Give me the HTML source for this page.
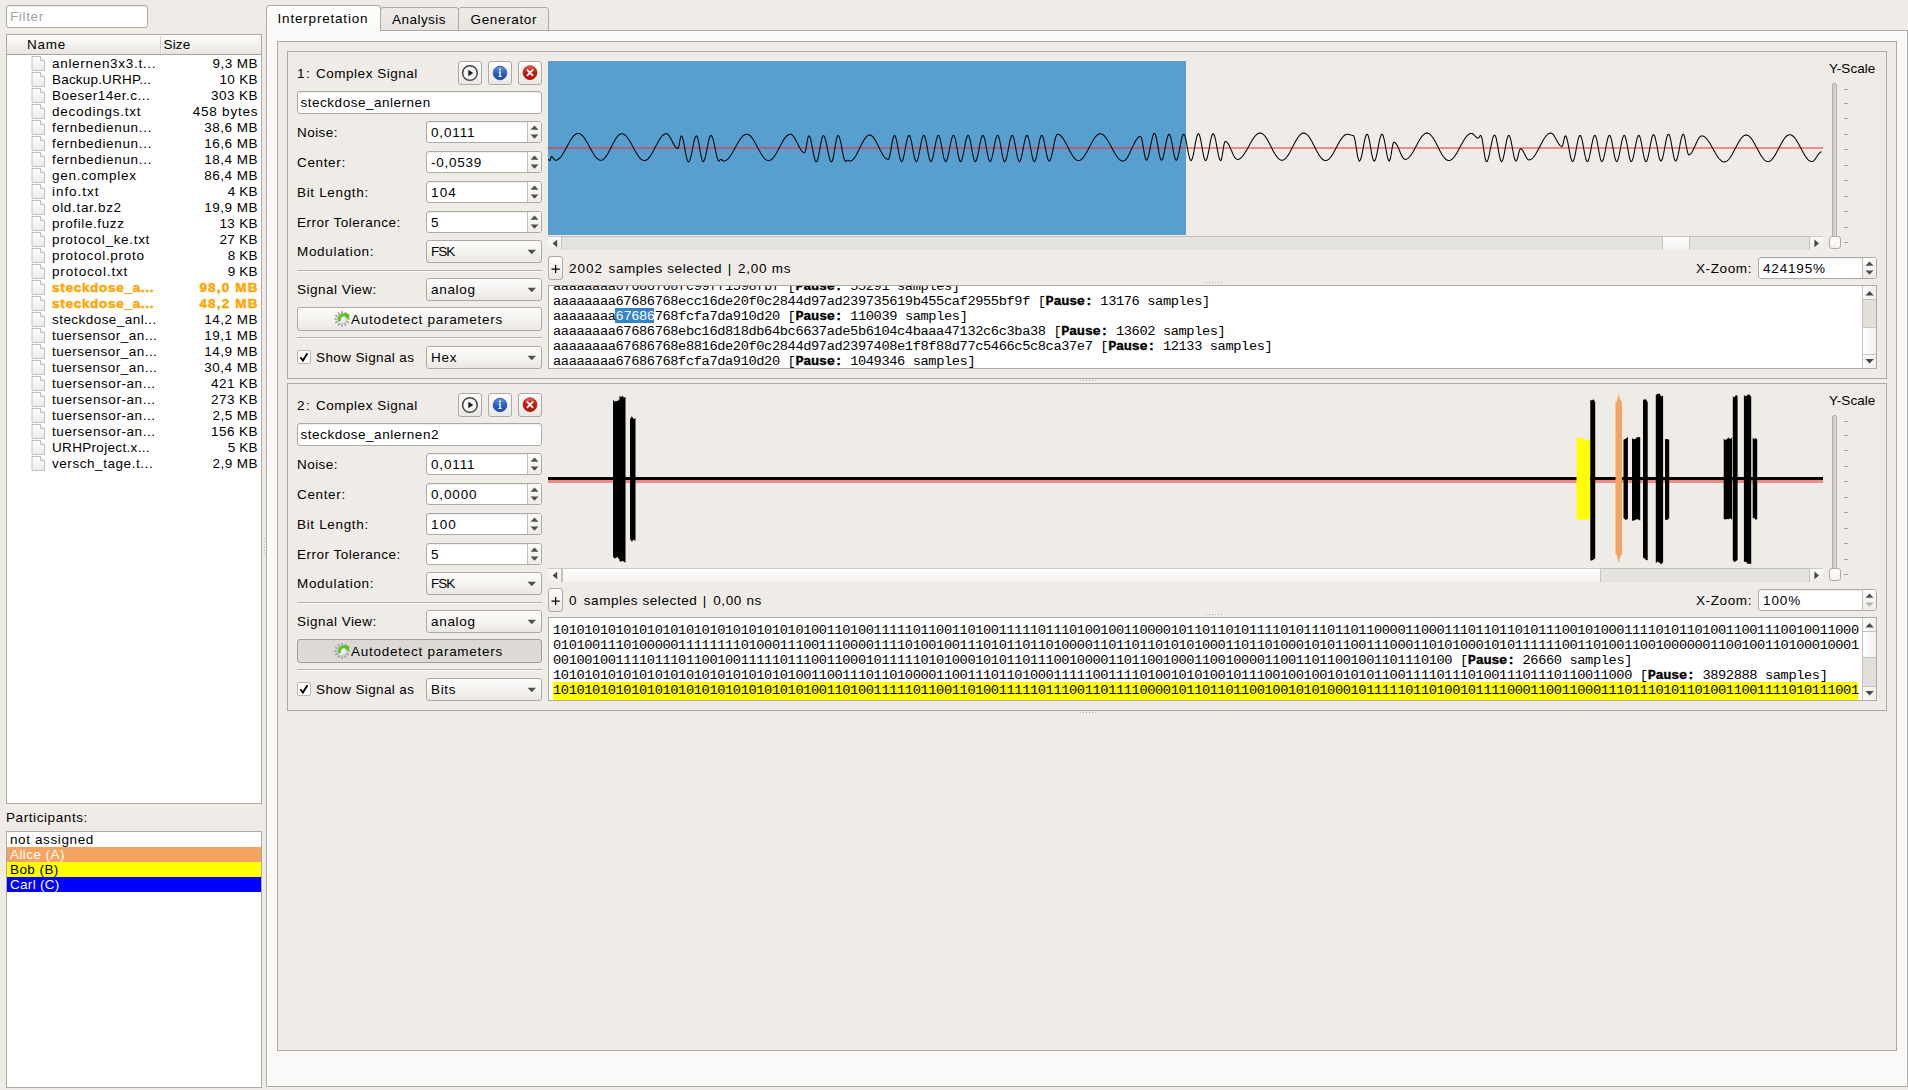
<!DOCTYPE html>
<html><head><meta charset="utf-8"><title>Universal Radio Hacker</title><style>
html,body{margin:0;padding:0}
body{width:1908px;height:1090px;background:#efebe7;position:relative;overflow:hidden;font-family:"Liberation Sans",sans-serif;font-size:13.5px;color:#000}
div,span.t,span.m,svg.a{position:absolute;box-sizing:border-box}
span.t{line-height:16px;height:16px;white-space:pre}
span.m b{-webkit-text-stroke:0.3px #000}
span.m{font-family:"Liberation Mono",monospace;font-size:13.7px;letter-spacing:-0.395px;line-height:15px;height:15px;white-space:pre}
</style></head><body>
<div style="left:6px;top:5px;width:142px;height:23px;background:#fff;border:1px solid #ada9a4;border-radius:3px;box-shadow:inset 0 1px 1px rgba(0,0,0,.08);"></div>
<span class="t" style="left:10.00px;top:8.5px;letter-spacing:0.628px;color:#a6a29c;">Filter</span>
<div style="left:6px;top:34px;width:256px;height:770px;background:#fff;border:1px solid #ada9a4;"></div>
<div style="left:7px;top:35px;width:254px;height:20px;background:linear-gradient(#fcfbfa,#f3f1ee 50%,#e8e5e1);border-bottom:1px solid #aaa59f;"></div>
<div style="left:160px;top:36px;width:1px;height:17px;background:#cfcbc6;"></div>
<div style="left:161px;top:36px;width:1px;height:17px;background:#fff;"></div>
<span class="t" style="left:27.00px;top:37px;letter-spacing:0.781px;">Name</span>
<span class="t" style="left:163.50px;top:37px;letter-spacing:0.141px;">Size</span>
<svg class="a" style="left:30.9px;top:55.6px" width="15" height="16" viewBox="0 0 15 16"><defs><linearGradient id="fg0" x1="0" y1="0" x2="0" y2="1"><stop offset="0" stop-color="#fff"/><stop offset="1" stop-color="#eaeaea"/></linearGradient></defs><path d="M1 .5H9.5L13.5 4.5V14.6H1Z" fill="url(#fg0)" stroke="#bebebe" stroke-width="1"/><path d="M9.5 .5V4.5H13.5" fill="#f6f6f6" stroke="#bebebe" stroke-width="1"/></svg>
<span class="t" style="left:52.00px;top:56px;letter-spacing:0.696px;">anlernen3x3.t...</span>
<span class="t" style="left:212.56px;top:56px;letter-spacing:0.435px;">9,3 MB</span>
<svg class="a" style="left:30.9px;top:71.6px" width="15" height="16" viewBox="0 0 15 16"><defs><linearGradient id="fg1" x1="0" y1="0" x2="0" y2="1"><stop offset="0" stop-color="#fff"/><stop offset="1" stop-color="#eaeaea"/></linearGradient></defs><path d="M1 .5H9.5L13.5 4.5V14.6H1Z" fill="url(#fg1)" stroke="#bebebe" stroke-width="1"/><path d="M9.5 .5V4.5H13.5" fill="#f6f6f6" stroke="#bebebe" stroke-width="1"/></svg>
<span class="t" style="left:52.00px;top:72px;letter-spacing:0.189px;">Backup.URHP...</span>
<span class="t" style="left:219.38px;top:72px;letter-spacing:0.336px;">10 KB</span>
<svg class="a" style="left:30.9px;top:87.6px" width="15" height="16" viewBox="0 0 15 16"><defs><linearGradient id="fg2" x1="0" y1="0" x2="0" y2="1"><stop offset="0" stop-color="#fff"/><stop offset="1" stop-color="#eaeaea"/></linearGradient></defs><path d="M1 .5H9.5L13.5 4.5V14.6H1Z" fill="url(#fg2)" stroke="#bebebe" stroke-width="1"/><path d="M9.5 .5V4.5H13.5" fill="#f6f6f6" stroke="#bebebe" stroke-width="1"/></svg>
<span class="t" style="left:52.00px;top:88px;letter-spacing:0.500px;">Boeser14er.c...</span>
<span class="t" style="left:211.11px;top:88px;letter-spacing:0.421px;">303 KB</span>
<svg class="a" style="left:30.9px;top:103.6px" width="15" height="16" viewBox="0 0 15 16"><defs><linearGradient id="fg3" x1="0" y1="0" x2="0" y2="1"><stop offset="0" stop-color="#fff"/><stop offset="1" stop-color="#eaeaea"/></linearGradient></defs><path d="M1 .5H9.5L13.5 4.5V14.6H1Z" fill="url(#fg3)" stroke="#bebebe" stroke-width="1"/><path d="M9.5 .5V4.5H13.5" fill="#f6f6f6" stroke="#bebebe" stroke-width="1"/></svg>
<span class="t" style="left:52.00px;top:104px;letter-spacing:0.746px;">decodings.txt</span>
<span class="t" style="left:192.74px;top:104px;letter-spacing:0.777px;">458 bytes</span>
<svg class="a" style="left:30.9px;top:119.6px" width="15" height="16" viewBox="0 0 15 16"><defs><linearGradient id="fg4" x1="0" y1="0" x2="0" y2="1"><stop offset="0" stop-color="#fff"/><stop offset="1" stop-color="#eaeaea"/></linearGradient></defs><path d="M1 .5H9.5L13.5 4.5V14.6H1Z" fill="url(#fg4)" stroke="#bebebe" stroke-width="1"/><path d="M9.5 .5V4.5H13.5" fill="#f6f6f6" stroke="#bebebe" stroke-width="1"/></svg>
<span class="t" style="left:52.00px;top:120px;letter-spacing:0.665px;">fernbedienun...</span>
<span class="t" style="left:204.29px;top:120px;letter-spacing:0.489px;">38,6 MB</span>
<svg class="a" style="left:30.9px;top:135.6px" width="15" height="16" viewBox="0 0 15 16"><defs><linearGradient id="fg5" x1="0" y1="0" x2="0" y2="1"><stop offset="0" stop-color="#fff"/><stop offset="1" stop-color="#eaeaea"/></linearGradient></defs><path d="M1 .5H9.5L13.5 4.5V14.6H1Z" fill="url(#fg5)" stroke="#bebebe" stroke-width="1"/><path d="M9.5 .5V4.5H13.5" fill="#f6f6f6" stroke="#bebebe" stroke-width="1"/></svg>
<span class="t" style="left:52.00px;top:136px;letter-spacing:0.665px;">fernbedienun...</span>
<span class="t" style="left:204.29px;top:136px;letter-spacing:0.489px;">16,6 MB</span>
<svg class="a" style="left:30.9px;top:151.6px" width="15" height="16" viewBox="0 0 15 16"><defs><linearGradient id="fg6" x1="0" y1="0" x2="0" y2="1"><stop offset="0" stop-color="#fff"/><stop offset="1" stop-color="#eaeaea"/></linearGradient></defs><path d="M1 .5H9.5L13.5 4.5V14.6H1Z" fill="url(#fg6)" stroke="#bebebe" stroke-width="1"/><path d="M9.5 .5V4.5H13.5" fill="#f6f6f6" stroke="#bebebe" stroke-width="1"/></svg>
<span class="t" style="left:52.00px;top:152px;letter-spacing:0.665px;">fernbedienun...</span>
<span class="t" style="left:204.29px;top:152px;letter-spacing:0.489px;">18,4 MB</span>
<svg class="a" style="left:30.9px;top:167.6px" width="15" height="16" viewBox="0 0 15 16"><defs><linearGradient id="fg7" x1="0" y1="0" x2="0" y2="1"><stop offset="0" stop-color="#fff"/><stop offset="1" stop-color="#eaeaea"/></linearGradient></defs><path d="M1 .5H9.5L13.5 4.5V14.6H1Z" fill="url(#fg7)" stroke="#bebebe" stroke-width="1"/><path d="M9.5 .5V4.5H13.5" fill="#f6f6f6" stroke="#bebebe" stroke-width="1"/></svg>
<span class="t" style="left:52.00px;top:168px;letter-spacing:0.740px;">gen.complex</span>
<span class="t" style="left:204.29px;top:168px;letter-spacing:0.489px;">86,4 MB</span>
<svg class="a" style="left:30.9px;top:183.6px" width="15" height="16" viewBox="0 0 15 16"><defs><linearGradient id="fg8" x1="0" y1="0" x2="0" y2="1"><stop offset="0" stop-color="#fff"/><stop offset="1" stop-color="#eaeaea"/></linearGradient></defs><path d="M1 .5H9.5L13.5 4.5V14.6H1Z" fill="url(#fg8)" stroke="#bebebe" stroke-width="1"/><path d="M9.5 .5V4.5H13.5" fill="#f6f6f6" stroke="#bebebe" stroke-width="1"/></svg>
<span class="t" style="left:52.00px;top:184px;letter-spacing:0.948px;">info.txt</span>
<span class="t" style="left:227.65px;top:184px;letter-spacing:0.193px;">4 KB</span>
<svg class="a" style="left:30.9px;top:199.6px" width="15" height="16" viewBox="0 0 15 16"><defs><linearGradient id="fg9" x1="0" y1="0" x2="0" y2="1"><stop offset="0" stop-color="#fff"/><stop offset="1" stop-color="#eaeaea"/></linearGradient></defs><path d="M1 .5H9.5L13.5 4.5V14.6H1Z" fill="url(#fg9)" stroke="#bebebe" stroke-width="1"/><path d="M9.5 .5V4.5H13.5" fill="#f6f6f6" stroke="#bebebe" stroke-width="1"/></svg>
<span class="t" style="left:52.00px;top:200px;letter-spacing:0.680px;">old.tar.bz2</span>
<span class="t" style="left:204.29px;top:200px;letter-spacing:0.489px;">19,9 MB</span>
<svg class="a" style="left:30.9px;top:215.6px" width="15" height="16" viewBox="0 0 15 16"><defs><linearGradient id="fg10" x1="0" y1="0" x2="0" y2="1"><stop offset="0" stop-color="#fff"/><stop offset="1" stop-color="#eaeaea"/></linearGradient></defs><path d="M1 .5H9.5L13.5 4.5V14.6H1Z" fill="url(#fg10)" stroke="#bebebe" stroke-width="1"/><path d="M9.5 .5V4.5H13.5" fill="#f6f6f6" stroke="#bebebe" stroke-width="1"/></svg>
<span class="t" style="left:52.00px;top:216px;letter-spacing:0.606px;">profile.fuzz</span>
<span class="t" style="left:219.38px;top:216px;letter-spacing:0.336px;">13 KB</span>
<svg class="a" style="left:30.9px;top:231.6px" width="15" height="16" viewBox="0 0 15 16"><defs><linearGradient id="fg11" x1="0" y1="0" x2="0" y2="1"><stop offset="0" stop-color="#fff"/><stop offset="1" stop-color="#eaeaea"/></linearGradient></defs><path d="M1 .5H9.5L13.5 4.5V14.6H1Z" fill="url(#fg11)" stroke="#bebebe" stroke-width="1"/><path d="M9.5 .5V4.5H13.5" fill="#f6f6f6" stroke="#bebebe" stroke-width="1"/></svg>
<span class="t" style="left:52.00px;top:232px;letter-spacing:0.683px;">protocol_ke.txt</span>
<span class="t" style="left:219.38px;top:232px;letter-spacing:0.336px;">27 KB</span>
<svg class="a" style="left:30.9px;top:247.6px" width="15" height="16" viewBox="0 0 15 16"><defs><linearGradient id="fg12" x1="0" y1="0" x2="0" y2="1"><stop offset="0" stop-color="#fff"/><stop offset="1" stop-color="#eaeaea"/></linearGradient></defs><path d="M1 .5H9.5L13.5 4.5V14.6H1Z" fill="url(#fg12)" stroke="#bebebe" stroke-width="1"/><path d="M9.5 .5V4.5H13.5" fill="#f6f6f6" stroke="#bebebe" stroke-width="1"/></svg>
<span class="t" style="left:52.00px;top:248px;letter-spacing:0.731px;">protocol.proto</span>
<span class="t" style="left:227.65px;top:248px;letter-spacing:0.193px;">8 KB</span>
<svg class="a" style="left:30.9px;top:263.6px" width="15" height="16" viewBox="0 0 15 16"><defs><linearGradient id="fg13" x1="0" y1="0" x2="0" y2="1"><stop offset="0" stop-color="#fff"/><stop offset="1" stop-color="#eaeaea"/></linearGradient></defs><path d="M1 .5H9.5L13.5 4.5V14.6H1Z" fill="url(#fg13)" stroke="#bebebe" stroke-width="1"/><path d="M9.5 .5V4.5H13.5" fill="#f6f6f6" stroke="#bebebe" stroke-width="1"/></svg>
<span class="t" style="left:52.00px;top:264px;letter-spacing:0.846px;">protocol.txt</span>
<span class="t" style="left:227.65px;top:264px;letter-spacing:0.193px;">9 KB</span>
<svg class="a" style="left:30.9px;top:279.6px" width="15" height="16" viewBox="0 0 15 16"><defs><linearGradient id="fg14" x1="0" y1="0" x2="0" y2="1"><stop offset="0" stop-color="#fff"/><stop offset="1" stop-color="#eaeaea"/></linearGradient></defs><path d="M1 .5H9.5L13.5 4.5V14.6H1Z" fill="url(#fg14)" stroke="#bebebe" stroke-width="1"/><path d="M9.5 .5V4.5H13.5" fill="#f6f6f6" stroke="#bebebe" stroke-width="1"/></svg>
<span class="t" style="left:52.00px;top:280px;letter-spacing:0.716px;font-weight:bold;-webkit-text-stroke:0.45px #ffa500;color:#ffa500;">steckdose_a...</span>
<span class="t" style="left:199.42px;top:280px;letter-spacing:1.176px;font-weight:bold;-webkit-text-stroke:0.45px #ffa500;color:#ffa500;">98,0 MB</span>
<svg class="a" style="left:30.9px;top:295.6px" width="15" height="16" viewBox="0 0 15 16"><defs><linearGradient id="fg15" x1="0" y1="0" x2="0" y2="1"><stop offset="0" stop-color="#fff"/><stop offset="1" stop-color="#eaeaea"/></linearGradient></defs><path d="M1 .5H9.5L13.5 4.5V14.6H1Z" fill="url(#fg15)" stroke="#bebebe" stroke-width="1"/><path d="M9.5 .5V4.5H13.5" fill="#f6f6f6" stroke="#bebebe" stroke-width="1"/></svg>
<span class="t" style="left:52.00px;top:296px;letter-spacing:0.716px;font-weight:bold;-webkit-text-stroke:0.45px #ffa500;color:#ffa500;">steckdose_a...</span>
<span class="t" style="left:199.42px;top:296px;letter-spacing:1.176px;font-weight:bold;-webkit-text-stroke:0.45px #ffa500;color:#ffa500;">48,2 MB</span>
<svg class="a" style="left:30.9px;top:311.6px" width="15" height="16" viewBox="0 0 15 16"><defs><linearGradient id="fg16" x1="0" y1="0" x2="0" y2="1"><stop offset="0" stop-color="#fff"/><stop offset="1" stop-color="#eaeaea"/></linearGradient></defs><path d="M1 .5H9.5L13.5 4.5V14.6H1Z" fill="url(#fg16)" stroke="#bebebe" stroke-width="1"/><path d="M9.5 .5V4.5H13.5" fill="#f6f6f6" stroke="#bebebe" stroke-width="1"/></svg>
<span class="t" style="left:52.00px;top:312px;letter-spacing:0.445px;">steckdose_anl...</span>
<span class="t" style="left:204.29px;top:312px;letter-spacing:0.489px;">14,2 MB</span>
<svg class="a" style="left:30.9px;top:327.6px" width="15" height="16" viewBox="0 0 15 16"><defs><linearGradient id="fg17" x1="0" y1="0" x2="0" y2="1"><stop offset="0" stop-color="#fff"/><stop offset="1" stop-color="#eaeaea"/></linearGradient></defs><path d="M1 .5H9.5L13.5 4.5V14.6H1Z" fill="url(#fg17)" stroke="#bebebe" stroke-width="1"/><path d="M9.5 .5V4.5H13.5" fill="#f6f6f6" stroke="#bebebe" stroke-width="1"/></svg>
<span class="t" style="left:52.00px;top:328px;letter-spacing:0.487px;">tuersensor_an...</span>
<span class="t" style="left:204.29px;top:328px;letter-spacing:0.489px;">19,1 MB</span>
<svg class="a" style="left:30.9px;top:343.6px" width="15" height="16" viewBox="0 0 15 16"><defs><linearGradient id="fg18" x1="0" y1="0" x2="0" y2="1"><stop offset="0" stop-color="#fff"/><stop offset="1" stop-color="#eaeaea"/></linearGradient></defs><path d="M1 .5H9.5L13.5 4.5V14.6H1Z" fill="url(#fg18)" stroke="#bebebe" stroke-width="1"/><path d="M9.5 .5V4.5H13.5" fill="#f6f6f6" stroke="#bebebe" stroke-width="1"/></svg>
<span class="t" style="left:52.00px;top:344px;letter-spacing:0.487px;">tuersensor_an...</span>
<span class="t" style="left:204.29px;top:344px;letter-spacing:0.489px;">14,9 MB</span>
<svg class="a" style="left:30.9px;top:359.6px" width="15" height="16" viewBox="0 0 15 16"><defs><linearGradient id="fg19" x1="0" y1="0" x2="0" y2="1"><stop offset="0" stop-color="#fff"/><stop offset="1" stop-color="#eaeaea"/></linearGradient></defs><path d="M1 .5H9.5L13.5 4.5V14.6H1Z" fill="url(#fg19)" stroke="#bebebe" stroke-width="1"/><path d="M9.5 .5V4.5H13.5" fill="#f6f6f6" stroke="#bebebe" stroke-width="1"/></svg>
<span class="t" style="left:52.00px;top:360px;letter-spacing:0.487px;">tuersensor_an...</span>
<span class="t" style="left:204.29px;top:360px;letter-spacing:0.489px;">30,4 MB</span>
<svg class="a" style="left:30.9px;top:375.6px" width="15" height="16" viewBox="0 0 15 16"><defs><linearGradient id="fg20" x1="0" y1="0" x2="0" y2="1"><stop offset="0" stop-color="#fff"/><stop offset="1" stop-color="#eaeaea"/></linearGradient></defs><path d="M1 .5H9.5L13.5 4.5V14.6H1Z" fill="url(#fg20)" stroke="#bebebe" stroke-width="1"/><path d="M9.5 .5V4.5H13.5" fill="#f6f6f6" stroke="#bebebe" stroke-width="1"/></svg>
<span class="t" style="left:52.00px;top:376px;letter-spacing:0.567px;">tuersensor-an...</span>
<span class="t" style="left:211.11px;top:376px;letter-spacing:0.421px;">421 KB</span>
<svg class="a" style="left:30.9px;top:391.6px" width="15" height="16" viewBox="0 0 15 16"><defs><linearGradient id="fg21" x1="0" y1="0" x2="0" y2="1"><stop offset="0" stop-color="#fff"/><stop offset="1" stop-color="#eaeaea"/></linearGradient></defs><path d="M1 .5H9.5L13.5 4.5V14.6H1Z" fill="url(#fg21)" stroke="#bebebe" stroke-width="1"/><path d="M9.5 .5V4.5H13.5" fill="#f6f6f6" stroke="#bebebe" stroke-width="1"/></svg>
<span class="t" style="left:52.00px;top:392px;letter-spacing:0.567px;">tuersensor-an...</span>
<span class="t" style="left:211.11px;top:392px;letter-spacing:0.421px;">273 KB</span>
<svg class="a" style="left:30.9px;top:407.6px" width="15" height="16" viewBox="0 0 15 16"><defs><linearGradient id="fg22" x1="0" y1="0" x2="0" y2="1"><stop offset="0" stop-color="#fff"/><stop offset="1" stop-color="#eaeaea"/></linearGradient></defs><path d="M1 .5H9.5L13.5 4.5V14.6H1Z" fill="url(#fg22)" stroke="#bebebe" stroke-width="1"/><path d="M9.5 .5V4.5H13.5" fill="#f6f6f6" stroke="#bebebe" stroke-width="1"/></svg>
<span class="t" style="left:52.00px;top:408px;letter-spacing:0.567px;">tuersensor-an...</span>
<span class="t" style="left:212.56px;top:408px;letter-spacing:0.435px;">2,5 MB</span>
<svg class="a" style="left:30.9px;top:423.6px" width="15" height="16" viewBox="0 0 15 16"><defs><linearGradient id="fg23" x1="0" y1="0" x2="0" y2="1"><stop offset="0" stop-color="#fff"/><stop offset="1" stop-color="#eaeaea"/></linearGradient></defs><path d="M1 .5H9.5L13.5 4.5V14.6H1Z" fill="url(#fg23)" stroke="#bebebe" stroke-width="1"/><path d="M9.5 .5V4.5H13.5" fill="#f6f6f6" stroke="#bebebe" stroke-width="1"/></svg>
<span class="t" style="left:52.00px;top:424px;letter-spacing:0.567px;">tuersensor-an...</span>
<span class="t" style="left:211.11px;top:424px;letter-spacing:0.421px;">156 KB</span>
<svg class="a" style="left:30.9px;top:439.6px" width="15" height="16" viewBox="0 0 15 16"><defs><linearGradient id="fg24" x1="0" y1="0" x2="0" y2="1"><stop offset="0" stop-color="#fff"/><stop offset="1" stop-color="#eaeaea"/></linearGradient></defs><path d="M1 .5H9.5L13.5 4.5V14.6H1Z" fill="url(#fg24)" stroke="#bebebe" stroke-width="1"/><path d="M9.5 .5V4.5H13.5" fill="#f6f6f6" stroke="#bebebe" stroke-width="1"/></svg>
<span class="t" style="left:52.00px;top:440px;letter-spacing:0.323px;">URHProject.x...</span>
<span class="t" style="left:227.65px;top:440px;letter-spacing:0.193px;">5 KB</span>
<svg class="a" style="left:30.9px;top:455.6px" width="15" height="16" viewBox="0 0 15 16"><defs><linearGradient id="fg25" x1="0" y1="0" x2="0" y2="1"><stop offset="0" stop-color="#fff"/><stop offset="1" stop-color="#eaeaea"/></linearGradient></defs><path d="M1 .5H9.5L13.5 4.5V14.6H1Z" fill="url(#fg25)" stroke="#bebebe" stroke-width="1"/><path d="M9.5 .5V4.5H13.5" fill="#f6f6f6" stroke="#bebebe" stroke-width="1"/></svg>
<span class="t" style="left:52.00px;top:456px;letter-spacing:0.556px;">versch_tage.t...</span>
<span class="t" style="left:212.56px;top:456px;letter-spacing:0.435px;">2,9 MB</span>
<span class="t" style="left:6.00px;top:810px;letter-spacing:0.587px;">Participants:</span>
<div style="left:6px;top:831px;width:256px;height:257px;background:#fff;border:1px solid #ada9a4;"></div>
<span class="t" style="left:10.00px;top:832px;letter-spacing:0.612px;">not assigned</span>
<div style="left:7px;top:847px;width:254px;height:15px;background:#f4a460;"></div>
<span class="t" style="left:10.00px;top:847px;letter-spacing:0.428px;color:#fff;">Alice (A)</span>
<div style="left:7px;top:862px;width:254px;height:15px;background:#ffff00;"></div>
<span class="t" style="left:10.00px;top:862px;letter-spacing:0.425px;">Bob (B)</span>
<div style="left:7px;top:877px;width:254px;height:15px;background:#0000ff;"></div>
<span class="t" style="left:10.00px;top:877px;letter-spacing:0.301px;color:#fff;">Carl (C)</span>
<div style="left:264px;top:538px;width:1px;height:1px;background:#b9b4ae;"></div>
<div style="left:264px;top:541px;width:1px;height:1px;background:#b9b4ae;"></div>
<div style="left:264px;top:544px;width:1px;height:1px;background:#b9b4ae;"></div>
<div style="left:264px;top:547px;width:1px;height:1px;background:#b9b4ae;"></div>
<div style="left:264px;top:550px;width:1px;height:1px;background:#b9b4ae;"></div>
<div style="left:264px;top:553px;width:1px;height:1px;background:#b9b4ae;"></div>
<div style="left:266px;top:30px;width:1642px;height:1057px;background:#faf9f7;border:1px solid #ada9a4;box-shadow:inset 0 0 0 1px #fff;"></div>
<div style="left:380px;top:7px;width:79px;height:24px;background:linear-gradient(#edeae7,#e8e5e1);border:1px solid #ada9a4;border-radius:3px 3px 0 0;"></div>
<div style="left:458px;top:7px;width:91px;height:24px;background:linear-gradient(#edeae7,#e8e5e1);border:1px solid #ada9a4;border-radius:3px 3px 0 0;"></div>
<div style="left:266px;top:5px;width:115px;height:26px;background:linear-gradient(#fdfdfc,#faf9f7);border:1px solid #ada9a4;border-bottom:none;border-radius:4px 4px 0 0;"></div>
<div style="left:267px;top:30px;width:113px;height:2px;background:#faf9f7;"></div>
<div style="left:267px;top:30px;width:1px;height:2px;background:#fff;"></div>
<span class="t" style="left:277.50px;top:11px;letter-spacing:0.809px;">Interpretation</span>
<span class="t" style="left:392.00px;top:12px;letter-spacing:0.470px;">Analysis</span>
<span class="t" style="left:470.50px;top:12px;letter-spacing:0.654px;">Generator</span>
<div style="left:277px;top:41px;width:1620px;height:1010px;background:#efebe7;border:1px solid #ada9a4;"></div>
<div style="left:287px;top:51px;width:1600px;height:328px;border:1px solid #ada9a4;"></div>
<span class="t" style="left:297.00px;top:66px;letter-spacing:1.392px;">1:</span>
<span class="t" style="left:316.00px;top:66px;letter-spacing:0.521px;">Complex Signal</span>
<div style="left:458px;top:61px;width:24px;height:24px;background:linear-gradient(#fdfcfb,#f4f2ef 55%,#eae7e3);border:1px solid #ada9a4;border-radius:3px;"></div>
<svg class="a" style="left:458px;top:61px" width="24" height="24" viewBox="0 0 24 24"><circle cx="11.9" cy="12" r="7.3" fill="#f6f6f5" stroke="#454545" stroke-width="1.5"/><path d="M10.3 8.7 L15.3 12 L10.3 15.3 Z" fill="#1c1c1c"/></svg>
<div style="left:488px;top:61px;width:24px;height:24px;background:linear-gradient(#fdfcfb,#f4f2ef 55%,#eae7e3);border:1px solid #ada9a4;border-radius:3px;"></div>
<svg class="a" style="left:488px;top:61px" width="24" height="24" viewBox="0 0 24 24"><defs><linearGradient id="ig61" x1="0" y1="0" x2="0" y2="1"><stop offset="0" stop-color="#5b95dc"/><stop offset=".5" stop-color="#2b62bf"/><stop offset="1" stop-color="#164aa9"/></linearGradient></defs><circle cx="12" cy="12" r="6.8" fill="url(#ig61)" stroke="#1c4c9f" stroke-width=".8"/><circle cx="12" cy="8.6" r="1.15" fill="#fff"/><path d="M10.5 10.6H12.8V15H13.8V16H10.4V15H11.4V11.6H10.5Z" fill="#fff"/></svg>
<div style="left:518px;top:61px;width:24px;height:24px;background:linear-gradient(#fdfcfb,#f4f2ef 55%,#eae7e3);border:1px solid #ada9a4;border-radius:3px;"></div>
<svg class="a" style="left:518px;top:61px" width="24" height="24" viewBox="0 0 24 24"><defs><linearGradient id="cg61" x1="0" y1="0" x2="0" y2="1"><stop offset="0" stop-color="#ec6c64"/><stop offset=".4" stop-color="#cc1c10"/><stop offset="1" stop-color="#b41005"/></linearGradient></defs><circle cx="12" cy="11.7" r="6.9" fill="url(#cg61)" stroke="#ac0f04" stroke-width=".8"/><path d="M9.4 9.1 L14.6 14.3 M14.6 9.1 L9.4 14.3" stroke="#fff" stroke-width="1.9" stroke-linecap="round"/></svg>
<div style="left:297px;top:91px;width:245px;height:23px;background:#fff;border:1px solid #ada9a4;border-radius:3px;box-shadow:inset 0 1px 1px rgba(0,0,0,.07);"></div>
<span class="t" style="left:300.50px;top:95px;letter-spacing:0.519px;">steckdose_anlernen</span>
<span class="t" style="left:297.00px;top:125px;letter-spacing:0.435px;">Noise:</span>
<div style="left:426px;top:121px;width:116px;height:22px;background:#fff;border:1px solid #ada9a4;border-radius:3px;box-shadow:inset 0 1px 1px rgba(0,0,0,.07);"></div>
<div style="left:527px;top:122px;width:14px;height:20px;background:linear-gradient(#fdfcfb,#efece8);border-left:1px solid #c3beb8;border-radius:0 2px 2px 0;"></div>
<svg class="a" style="left:527px;top:121px" width="14" height="22" viewBox="0 0 14 22"><path d="M3.5 8.8 L7.5 4.4 L11.5 8.8 Z" fill="#505050"/><path d="M3.5 13.4 L7.5 17.8 L11.5 13.4 Z" fill="#505050"/></svg>
<span class="t" style="left:431.00px;top:125px;letter-spacing:0.839px;">0,0111</span>
<span class="t" style="left:297.00px;top:155px;letter-spacing:0.644px;">Center:</span>
<div style="left:426px;top:151px;width:116px;height:22px;background:#fff;border:1px solid #ada9a4;border-radius:3px;box-shadow:inset 0 1px 1px rgba(0,0,0,.07);"></div>
<div style="left:527px;top:152px;width:14px;height:20px;background:linear-gradient(#fdfcfb,#efece8);border-left:1px solid #c3beb8;border-radius:0 2px 2px 0;"></div>
<svg class="a" style="left:527px;top:151px" width="14" height="22" viewBox="0 0 14 22"><path d="M3.5 8.8 L7.5 4.4 L11.5 8.8 Z" fill="#505050"/><path d="M3.5 13.4 L7.5 17.8 L11.5 13.4 Z" fill="#505050"/></svg>
<span class="t" style="left:431.00px;top:155px;letter-spacing:0.732px;">-0,0539</span>
<span class="t" style="left:297.00px;top:185px;letter-spacing:0.666px;">Bit Length:</span>
<div style="left:426px;top:181px;width:116px;height:22px;background:#fff;border:1px solid #ada9a4;border-radius:3px;box-shadow:inset 0 1px 1px rgba(0,0,0,.07);"></div>
<div style="left:527px;top:182px;width:14px;height:20px;background:linear-gradient(#fdfcfb,#efece8);border-left:1px solid #c3beb8;border-radius:0 2px 2px 0;"></div>
<svg class="a" style="left:527px;top:181px" width="14" height="22" viewBox="0 0 14 22"><path d="M3.5 8.8 L7.5 4.4 L11.5 8.8 Z" fill="#505050"/><path d="M3.5 13.4 L7.5 17.8 L11.5 13.4 Z" fill="#505050"/></svg>
<span class="t" style="left:431.00px;top:185px;letter-spacing:1.144px;">104</span>
<span class="t" style="left:297.00px;top:215px;letter-spacing:0.492px;">Error Tolerance:</span>
<div style="left:426px;top:211px;width:116px;height:22px;background:#fff;border:1px solid #ada9a4;border-radius:3px;box-shadow:inset 0 1px 1px rgba(0,0,0,.07);"></div>
<div style="left:527px;top:212px;width:14px;height:20px;background:linear-gradient(#fdfcfb,#efece8);border-left:1px solid #c3beb8;border-radius:0 2px 2px 0;"></div>
<svg class="a" style="left:527px;top:211px" width="14" height="22" viewBox="0 0 14 22"><path d="M3.5 8.8 L7.5 4.4 L11.5 8.8 Z" fill="#505050"/><path d="M3.5 13.4 L7.5 17.8 L11.5 13.4 Z" fill="#505050"/></svg>
<span class="t" style="left:431.00px;top:215px;letter-spacing:0.000px;">5</span>
<span class="t" style="left:297.00px;top:244px;letter-spacing:0.673px;">Modulation:</span>
<div style="left:426px;top:240px;width:116px;height:23px;background:linear-gradient(#fdfcfb,#f4f2ef 55%,#eae7e3);border:1px solid #ada9a4;border-radius:3px;"></div>
<svg class="a" style="left:526.5px;top:249.1px" width="10" height="6" viewBox="0 0 10 6"><path d="M.5 .8 L9 .8 L4.75 5.2 Z" fill="#505050"/></svg>
<span class="t" style="left:431.00px;top:244px;letter-spacing:-1.000px;">FSK</span>
<div style="left:297px;top:270px;width:245px;height:1px;background:#b5b0aa;"></div>
<div style="left:297px;top:271px;width:245px;height:1px;background:#fbfaf9;"></div>
<span class="t" style="left:297.00px;top:282px;letter-spacing:0.481px;">Signal View:</span>
<div style="left:426px;top:278px;width:116px;height:23px;background:linear-gradient(#fdfcfb,#f4f2ef 55%,#eae7e3);border:1px solid #ada9a4;border-radius:3px;"></div>
<svg class="a" style="left:526.5px;top:287.1px" width="10" height="6" viewBox="0 0 10 6"><path d="M.5 .8 L9 .8 L4.75 5.2 Z" fill="#505050"/></svg>
<span class="t" style="left:431.00px;top:282px;letter-spacing:0.690px;">analog</span>
<div style="left:297px;top:307px;width:245px;height:24px;background:linear-gradient(#fdfcfb,#f4f2ef 55%,#eae7e3);border:1px solid #ada9a4;border-radius:3px;"></div>
<svg class="a" style="left:334px;top:311px" width="16" height="16" viewBox="0 0 16 16"><path d="M8.00 2.80 L8.00 0.30 M10.60 3.50 L11.85 1.33 M12.50 5.40 L14.67 4.15 M13.20 8.00 L15.70 8.00 M12.50 10.60 L14.67 11.85 M10.60 12.50 L11.85 14.67 M8.00 13.20 L8.00 15.70 M5.40 12.50 L4.15 14.67 M3.50 10.60 L1.33 11.85 M2.80 8.00 L0.30 8.00 M3.50 5.40 L1.33 4.15 M5.40 3.50 L4.15 1.33" stroke="#9c9c9c" stroke-width="1.7" fill="none"/><circle cx="8" cy="8" r="4.9" fill="#ececec" stroke="#c4c4c4" stroke-width="1.3"/><circle cx="8" cy="8.2" r="2.2" fill="#fff" stroke="#cfcfcf" stroke-width=".6"/><path d="M5.6 10.2 C4.6 6.6 6.6 3.6 10 3.7 L12.4 3.9" fill="none" stroke="#5cc21e" stroke-width="3"/><path d="M11.4 1.4 L15.4 3.4 L15.2 7.2 L11.6 6.9 Z" fill="#5cc21e"/></svg>
<span class="t" style="left:351.00px;top:312px;letter-spacing:0.737px;">Autodetect parameters</span>
<div style="left:297px;top:337px;width:245px;height:1px;background:#b5b0aa;"></div>
<div style="left:297px;top:338px;width:245px;height:1px;background:#fbfaf9;"></div>
<div style="left:297px;top:350px;width:14px;height:14px;background:#fff;border:1px solid #b9b4ae;border-radius:2px;"></div>
<svg class="a" style="left:297px;top:350px" width="14" height="14" viewBox="0 0 14 14"><path d="M3.4 7.2 L5.9 10.6 L10.4 3.2" fill="none" stroke="#000" stroke-width="1.9"/></svg>
<span class="t" style="left:316.00px;top:350px;letter-spacing:0.381px;">Show Signal as</span>
<div style="left:426px;top:346px;width:116px;height:23px;background:linear-gradient(#fdfcfb,#f4f2ef 55%,#eae7e3);border:1px solid #ada9a4;border-radius:3px;"></div>
<svg class="a" style="left:526.5px;top:355.1px" width="10" height="6" viewBox="0 0 10 6"><path d="M.5 .8 L9 .8 L4.75 5.2 Z" fill="#505050"/></svg>
<span class="t" style="left:431.00px;top:350px;letter-spacing:0.730px;">Hex</span>
<div style="left:548px;top:256px;width:15px;height:24px;background:linear-gradient(#fdfcfb,#f4f2ef 55%,#eae7e3);border:1px solid #ada9a4;border-radius:3px;"></div>
<svg class="a" style="left:548px;top:256px" width="15" height="24" viewBox="0 0 15 24"><path d="M3.5 13H11.7 M7.6 8.9V17.1" stroke="#000" stroke-width="1.25" fill="none"/></svg>
<span class="t" style="left:569.00px;top:261px;letter-spacing:1.017px;">2002</span>
<span class="t" style="left:608.58px;top:261px;letter-spacing:0.583px;">samples selected</span>
<span class="t" style="left:727.63px;top:261px;letter-spacing:0.000px;">|</span>
<span class="t" style="left:738.01px;top:261px;letter-spacing:0.749px;">2,00 ms</span>
<span class="t" style="left:1696.00px;top:261px;letter-spacing:0.616px;">X-Zoom:</span>
<div style="left:1758px;top:257px;width:119px;height:22px;background:#fff;border:1px solid #ada9a4;border-radius:3px;box-shadow:inset 0 1px 1px rgba(0,0,0,.07);"></div>
<div style="left:1862px;top:258px;width:14px;height:20px;background:linear-gradient(#fdfcfb,#efece8);border-left:1px solid #c3beb8;border-radius:0 2px 2px 0;"></div>
<svg class="a" style="left:1862px;top:257px" width="14" height="22" viewBox="0 0 14 22"><path d="M3.5 8.8 L7.5 4.4 L11.5 8.8 Z" fill="#505050"/><path d="M3.5 13.4 L7.5 17.8 L11.5 13.4 Z" fill="#505050"/></svg>
<span class="t" style="left:1763.00px;top:261px;letter-spacing:0.821px;">424195%</span>
<span class="t" style="left:1829.00px;top:61px;letter-spacing:0.056px;">Y-Scale</span>
<div style="left:1832px;top:83px;width:5px;height:160px;background:linear-gradient(90deg,#c9c5c0,#dedbd7);border:1px solid #b5b0aa;border-radius:2px;"></div>
<div style="left:1844px;top:89px;width:4px;height:1px;background:#aaa69f;"></div>
<div style="left:1844px;top:103px;width:4px;height:1px;background:#aaa69f;"></div>
<div style="left:1844px;top:118px;width:4px;height:1px;background:#aaa69f;"></div>
<div style="left:1844px;top:134px;width:4px;height:1px;background:#aaa69f;"></div>
<div style="left:1844px;top:149px;width:4px;height:1px;background:#aaa69f;"></div>
<div style="left:1844px;top:165px;width:4px;height:1px;background:#aaa69f;"></div>
<div style="left:1844px;top:180px;width:4px;height:1px;background:#aaa69f;"></div>
<div style="left:1844px;top:196px;width:4px;height:1px;background:#aaa69f;"></div>
<div style="left:1844px;top:211px;width:4px;height:1px;background:#aaa69f;"></div>
<div style="left:1844px;top:227px;width:4px;height:1px;background:#aaa69f;"></div>
<div style="left:1844px;top:242px;width:4px;height:1px;background:#aaa69f;"></div>
<div style="left:1829px;top:236px;width:12px;height:13px;background:linear-gradient(#fff,#f1efec);border:1px solid #ada9a4;border-radius:3px;"></div>
<div style="left:1206px;top:282px;width:1px;height:1px;background:#b9b4ae;"></div>
<div style="left:1080px;top:379.5px;width:1px;height:1px;background:#b9b4ae;"></div>
<div style="left:1209px;top:282px;width:1px;height:1px;background:#b9b4ae;"></div>
<div style="left:1083px;top:379.5px;width:1px;height:1px;background:#b9b4ae;"></div>
<div style="left:1212px;top:282px;width:1px;height:1px;background:#b9b4ae;"></div>
<div style="left:1086px;top:379.5px;width:1px;height:1px;background:#b9b4ae;"></div>
<div style="left:1215px;top:282px;width:1px;height:1px;background:#b9b4ae;"></div>
<div style="left:1089px;top:379.5px;width:1px;height:1px;background:#b9b4ae;"></div>
<div style="left:1218px;top:282px;width:1px;height:1px;background:#b9b4ae;"></div>
<div style="left:1092px;top:379.5px;width:1px;height:1px;background:#b9b4ae;"></div>
<div style="left:1221px;top:282px;width:1px;height:1px;background:#b9b4ae;"></div>
<div style="left:1095px;top:379.5px;width:1px;height:1px;background:#b9b4ae;"></div>
<div style="left:287px;top:383px;width:1600px;height:328px;border:1px solid #ada9a4;"></div>
<span class="t" style="left:297.00px;top:398px;letter-spacing:1.392px;">2:</span>
<span class="t" style="left:316.00px;top:398px;letter-spacing:0.521px;">Complex Signal</span>
<div style="left:458px;top:393px;width:24px;height:24px;background:linear-gradient(#fdfcfb,#f4f2ef 55%,#eae7e3);border:1px solid #ada9a4;border-radius:3px;"></div>
<svg class="a" style="left:458px;top:393px" width="24" height="24" viewBox="0 0 24 24"><circle cx="11.9" cy="12" r="7.3" fill="#f6f6f5" stroke="#454545" stroke-width="1.5"/><path d="M10.3 8.7 L15.3 12 L10.3 15.3 Z" fill="#1c1c1c"/></svg>
<div style="left:488px;top:393px;width:24px;height:24px;background:linear-gradient(#fdfcfb,#f4f2ef 55%,#eae7e3);border:1px solid #ada9a4;border-radius:3px;"></div>
<svg class="a" style="left:488px;top:393px" width="24" height="24" viewBox="0 0 24 24"><defs><linearGradient id="ig393" x1="0" y1="0" x2="0" y2="1"><stop offset="0" stop-color="#5b95dc"/><stop offset=".5" stop-color="#2b62bf"/><stop offset="1" stop-color="#164aa9"/></linearGradient></defs><circle cx="12" cy="12" r="6.8" fill="url(#ig393)" stroke="#1c4c9f" stroke-width=".8"/><circle cx="12" cy="8.6" r="1.15" fill="#fff"/><path d="M10.5 10.6H12.8V15H13.8V16H10.4V15H11.4V11.6H10.5Z" fill="#fff"/></svg>
<div style="left:518px;top:393px;width:24px;height:24px;background:linear-gradient(#fdfcfb,#f4f2ef 55%,#eae7e3);border:1px solid #ada9a4;border-radius:3px;"></div>
<svg class="a" style="left:518px;top:393px" width="24" height="24" viewBox="0 0 24 24"><defs><linearGradient id="cg393" x1="0" y1="0" x2="0" y2="1"><stop offset="0" stop-color="#ec6c64"/><stop offset=".4" stop-color="#cc1c10"/><stop offset="1" stop-color="#b41005"/></linearGradient></defs><circle cx="12" cy="11.7" r="6.9" fill="url(#cg393)" stroke="#ac0f04" stroke-width=".8"/><path d="M9.4 9.1 L14.6 14.3 M14.6 9.1 L9.4 14.3" stroke="#fff" stroke-width="1.9" stroke-linecap="round"/></svg>
<div style="left:297px;top:423px;width:245px;height:23px;background:#fff;border:1px solid #ada9a4;border-radius:3px;box-shadow:inset 0 1px 1px rgba(0,0,0,.07);"></div>
<span class="t" style="left:300.50px;top:427px;letter-spacing:0.533px;">steckdose_anlernen2</span>
<span class="t" style="left:297.00px;top:457px;letter-spacing:0.435px;">Noise:</span>
<div style="left:426px;top:453px;width:116px;height:22px;background:#fff;border:1px solid #ada9a4;border-radius:3px;box-shadow:inset 0 1px 1px rgba(0,0,0,.07);"></div>
<div style="left:527px;top:454px;width:14px;height:20px;background:linear-gradient(#fdfcfb,#efece8);border-left:1px solid #c3beb8;border-radius:0 2px 2px 0;"></div>
<svg class="a" style="left:527px;top:453px" width="14" height="22" viewBox="0 0 14 22"><path d="M3.5 8.8 L7.5 4.4 L11.5 8.8 Z" fill="#505050"/><path d="M3.5 13.4 L7.5 17.8 L11.5 13.4 Z" fill="#505050"/></svg>
<span class="t" style="left:431.00px;top:457px;letter-spacing:0.839px;">0,0111</span>
<span class="t" style="left:297.00px;top:487px;letter-spacing:0.644px;">Center:</span>
<div style="left:426px;top:483px;width:116px;height:22px;background:#fff;border:1px solid #ada9a4;border-radius:3px;box-shadow:inset 0 1px 1px rgba(0,0,0,.07);"></div>
<div style="left:527px;top:484px;width:14px;height:20px;background:linear-gradient(#fdfcfb,#efece8);border-left:1px solid #c3beb8;border-radius:0 2px 2px 0;"></div>
<svg class="a" style="left:527px;top:483px" width="14" height="22" viewBox="0 0 14 22"><path d="M3.5 8.8 L7.5 4.4 L11.5 8.8 Z" fill="#505050"/><path d="M3.5 13.4 L7.5 17.8 L11.5 13.4 Z" fill="#505050"/></svg>
<span class="t" style="left:431.00px;top:487px;letter-spacing:0.839px;">0,0000</span>
<span class="t" style="left:297.00px;top:517px;letter-spacing:0.666px;">Bit Length:</span>
<div style="left:426px;top:513px;width:116px;height:22px;background:#fff;border:1px solid #ada9a4;border-radius:3px;box-shadow:inset 0 1px 1px rgba(0,0,0,.07);"></div>
<div style="left:527px;top:514px;width:14px;height:20px;background:linear-gradient(#fdfcfb,#efece8);border-left:1px solid #c3beb8;border-radius:0 2px 2px 0;"></div>
<svg class="a" style="left:527px;top:513px" width="14" height="22" viewBox="0 0 14 22"><path d="M3.5 8.8 L7.5 4.4 L11.5 8.8 Z" fill="#505050"/><path d="M3.5 13.4 L7.5 17.8 L11.5 13.4 Z" fill="#505050"/></svg>
<span class="t" style="left:431.00px;top:517px;letter-spacing:1.144px;">100</span>
<span class="t" style="left:297.00px;top:547px;letter-spacing:0.492px;">Error Tolerance:</span>
<div style="left:426px;top:543px;width:116px;height:22px;background:#fff;border:1px solid #ada9a4;border-radius:3px;box-shadow:inset 0 1px 1px rgba(0,0,0,.07);"></div>
<div style="left:527px;top:544px;width:14px;height:20px;background:linear-gradient(#fdfcfb,#efece8);border-left:1px solid #c3beb8;border-radius:0 2px 2px 0;"></div>
<svg class="a" style="left:527px;top:543px" width="14" height="22" viewBox="0 0 14 22"><path d="M3.5 8.8 L7.5 4.4 L11.5 8.8 Z" fill="#505050"/><path d="M3.5 13.4 L7.5 17.8 L11.5 13.4 Z" fill="#505050"/></svg>
<span class="t" style="left:431.00px;top:547px;letter-spacing:0.000px;">5</span>
<span class="t" style="left:297.00px;top:576px;letter-spacing:0.673px;">Modulation:</span>
<div style="left:426px;top:572px;width:116px;height:23px;background:linear-gradient(#fdfcfb,#f4f2ef 55%,#eae7e3);border:1px solid #ada9a4;border-radius:3px;"></div>
<svg class="a" style="left:526.5px;top:581.1px" width="10" height="6" viewBox="0 0 10 6"><path d="M.5 .8 L9 .8 L4.75 5.2 Z" fill="#505050"/></svg>
<span class="t" style="left:431.00px;top:576px;letter-spacing:-1.000px;">FSK</span>
<div style="left:297px;top:602px;width:245px;height:1px;background:#b5b0aa;"></div>
<div style="left:297px;top:603px;width:245px;height:1px;background:#fbfaf9;"></div>
<span class="t" style="left:297.00px;top:614px;letter-spacing:0.481px;">Signal View:</span>
<div style="left:426px;top:610px;width:116px;height:23px;background:linear-gradient(#fdfcfb,#f4f2ef 55%,#eae7e3);border:1px solid #ada9a4;border-radius:3px;"></div>
<svg class="a" style="left:526.5px;top:619.1px" width="10" height="6" viewBox="0 0 10 6"><path d="M.5 .8 L9 .8 L4.75 5.2 Z" fill="#505050"/></svg>
<span class="t" style="left:431.00px;top:614px;letter-spacing:0.690px;">analog</span>
<div style="left:297px;top:639px;width:245px;height:24px;background:linear-gradient(#dcd9d5,#dedbd7);border:1px solid #a29d97;border-radius:3px;"></div>
<svg class="a" style="left:334px;top:643px" width="16" height="16" viewBox="0 0 16 16"><path d="M8.00 2.80 L8.00 0.30 M10.60 3.50 L11.85 1.33 M12.50 5.40 L14.67 4.15 M13.20 8.00 L15.70 8.00 M12.50 10.60 L14.67 11.85 M10.60 12.50 L11.85 14.67 M8.00 13.20 L8.00 15.70 M5.40 12.50 L4.15 14.67 M3.50 10.60 L1.33 11.85 M2.80 8.00 L0.30 8.00 M3.50 5.40 L1.33 4.15 M5.40 3.50 L4.15 1.33" stroke="#9c9c9c" stroke-width="1.7" fill="none"/><circle cx="8" cy="8" r="4.9" fill="#ececec" stroke="#c4c4c4" stroke-width="1.3"/><circle cx="8" cy="8.2" r="2.2" fill="#fff" stroke="#cfcfcf" stroke-width=".6"/><path d="M5.6 10.2 C4.6 6.6 6.6 3.6 10 3.7 L12.4 3.9" fill="none" stroke="#5cc21e" stroke-width="3"/><path d="M11.4 1.4 L15.4 3.4 L15.2 7.2 L11.6 6.9 Z" fill="#5cc21e"/></svg>
<span class="t" style="left:351.00px;top:644px;letter-spacing:0.737px;">Autodetect parameters</span>
<div style="left:297px;top:669px;width:245px;height:1px;background:#b5b0aa;"></div>
<div style="left:297px;top:670px;width:245px;height:1px;background:#fbfaf9;"></div>
<div style="left:297px;top:682px;width:14px;height:14px;background:#fff;border:1px solid #b9b4ae;border-radius:2px;"></div>
<svg class="a" style="left:297px;top:682px" width="14" height="14" viewBox="0 0 14 14"><path d="M3.4 7.2 L5.9 10.6 L10.4 3.2" fill="none" stroke="#000" stroke-width="1.9"/></svg>
<span class="t" style="left:316.00px;top:682px;letter-spacing:0.381px;">Show Signal as</span>
<div style="left:426px;top:678px;width:116px;height:23px;background:linear-gradient(#fdfcfb,#f4f2ef 55%,#eae7e3);border:1px solid #ada9a4;border-radius:3px;"></div>
<svg class="a" style="left:526.5px;top:687.1px" width="10" height="6" viewBox="0 0 10 6"><path d="M.5 .8 L9 .8 L4.75 5.2 Z" fill="#505050"/></svg>
<span class="t" style="left:431.00px;top:682px;letter-spacing:0.632px;">Bits</span>
<div style="left:548px;top:588px;width:15px;height:24px;background:linear-gradient(#fdfcfb,#f4f2ef 55%,#eae7e3);border:1px solid #ada9a4;border-radius:3px;"></div>
<svg class="a" style="left:548px;top:588px" width="15" height="24" viewBox="0 0 15 24"><path d="M3.5 13H11.7 M7.6 8.9V17.1" stroke="#000" stroke-width="1.25" fill="none"/></svg>
<span class="t" style="left:569.00px;top:593px;letter-spacing:0.000px;">0</span>
<span class="t" style="left:583.77px;top:593px;letter-spacing:0.583px;">samples selected</span>
<span class="t" style="left:702.82px;top:593px;letter-spacing:0.000px;">|</span>
<span class="t" style="left:713.20px;top:593px;letter-spacing:0.634px;">0,00 ns</span>
<span class="t" style="left:1696.00px;top:593px;letter-spacing:0.616px;">X-Zoom:</span>
<div style="left:1758px;top:589px;width:119px;height:22px;background:#fff;border:1px solid #ada9a4;border-radius:3px;box-shadow:inset 0 1px 1px rgba(0,0,0,.07);"></div>
<div style="left:1862px;top:590px;width:14px;height:20px;background:linear-gradient(#fdfcfb,#efece8);border-left:1px solid #c3beb8;border-radius:0 2px 2px 0;"></div>
<svg class="a" style="left:1862px;top:589px" width="14" height="22" viewBox="0 0 14 22"><path d="M3.5 8.8 L7.5 4.4 L11.5 8.8 Z" fill="#505050"/><path d="M3.5 13.4 L7.5 17.8 L11.5 13.4 Z" fill="#b5b1ac"/></svg>
<span class="t" style="left:1763.00px;top:593px;letter-spacing:0.879px;">100%</span>
<span class="t" style="left:1829.00px;top:393px;letter-spacing:0.056px;">Y-Scale</span>
<div style="left:1832px;top:415px;width:5px;height:160px;background:linear-gradient(90deg,#c9c5c0,#dedbd7);border:1px solid #b5b0aa;border-radius:2px;"></div>
<div style="left:1844px;top:421px;width:4px;height:1px;background:#aaa69f;"></div>
<div style="left:1844px;top:435px;width:4px;height:1px;background:#aaa69f;"></div>
<div style="left:1844px;top:450px;width:4px;height:1px;background:#aaa69f;"></div>
<div style="left:1844px;top:466px;width:4px;height:1px;background:#aaa69f;"></div>
<div style="left:1844px;top:481px;width:4px;height:1px;background:#aaa69f;"></div>
<div style="left:1844px;top:497px;width:4px;height:1px;background:#aaa69f;"></div>
<div style="left:1844px;top:512px;width:4px;height:1px;background:#aaa69f;"></div>
<div style="left:1844px;top:528px;width:4px;height:1px;background:#aaa69f;"></div>
<div style="left:1844px;top:543px;width:4px;height:1px;background:#aaa69f;"></div>
<div style="left:1844px;top:559px;width:4px;height:1px;background:#aaa69f;"></div>
<div style="left:1844px;top:574px;width:4px;height:1px;background:#aaa69f;"></div>
<div style="left:1829px;top:568px;width:12px;height:13px;background:linear-gradient(#fff,#f1efec);border:1px solid #ada9a4;border-radius:3px;"></div>
<div style="left:1206px;top:614px;width:1px;height:1px;background:#b9b4ae;"></div>
<div style="left:1080px;top:711.5px;width:1px;height:1px;background:#b9b4ae;"></div>
<div style="left:1209px;top:614px;width:1px;height:1px;background:#b9b4ae;"></div>
<div style="left:1083px;top:711.5px;width:1px;height:1px;background:#b9b4ae;"></div>
<div style="left:1212px;top:614px;width:1px;height:1px;background:#b9b4ae;"></div>
<div style="left:1086px;top:711.5px;width:1px;height:1px;background:#b9b4ae;"></div>
<div style="left:1215px;top:614px;width:1px;height:1px;background:#b9b4ae;"></div>
<div style="left:1089px;top:711.5px;width:1px;height:1px;background:#b9b4ae;"></div>
<div style="left:1218px;top:614px;width:1px;height:1px;background:#b9b4ae;"></div>
<div style="left:1092px;top:711.5px;width:1px;height:1px;background:#b9b4ae;"></div>
<div style="left:1221px;top:614px;width:1px;height:1px;background:#b9b4ae;"></div>
<div style="left:1095px;top:711.5px;width:1px;height:1px;background:#b9b4ae;"></div>
<div style="left:548px;top:61px;width:638px;height:174px;background:#579fcf;"></div>
<div style="left:1186px;top:147px;width:637px;height:2px;background:#f08a8a;"></div>
<div style="left:548px;top:147px;width:638px;height:2px;background:#b25e7c;"></div>
<svg class="a" style="left:548px;top:61px" width="1275" height="174" viewBox="0 0 1275 174"><path d="M0.0 98.4 L0.7 98.7 L1.3 99.3 L2.0 99.6 L2.7 97.5 L3.4 95.5 L4.1 95.8 L4.8 96.5 L5.5 97.4 L6.1 98.3 L6.8 99.0 L7.5 99.2 L8.2 99.2 L8.8 99.0 L9.4 98.8 L10.0 98.5 L10.6 98.0 L11.2 97.5 L11.8 96.9 L12.4 96.2 L13.1 95.5 L13.7 94.7 L14.3 93.8 L14.9 92.8 L15.5 91.8 L16.1 90.8 L16.7 89.7 L17.3 88.6 L18.0 87.5 L18.6 86.4 L19.2 85.2 L19.8 84.1 L20.4 83.0 L21.0 81.9 L21.6 80.8 L22.2 79.8 L22.8 78.8 L23.5 77.8 L24.1 76.9 L24.7 76.1 L25.3 75.4 L25.9 74.7 L26.5 74.1 L27.1 73.6 L27.7 73.2 L28.4 72.8 L29.0 72.6 L29.6 72.4 L30.2 72.4 L30.8 72.4 L31.4 72.6 L32.0 72.8 L32.6 73.2 L33.2 73.6 L33.9 74.1 L34.5 74.7 L35.1 75.4 L35.7 76.1 L36.3 76.9 L36.9 77.8 L37.5 78.8 L38.1 79.8 L38.8 80.8 L39.4 81.9 L40.0 83.0 L40.6 84.1 L41.2 85.2 L41.8 86.4 L42.4 87.5 L43.0 88.6 L43.7 89.7 L44.3 90.8 L44.9 91.8 L45.5 92.8 L46.1 93.8 L46.7 94.7 L47.3 95.5 L47.9 96.2 L48.5 96.9 L49.2 97.5 L49.8 98.0 L50.4 98.5 L51.0 98.8 L51.6 99.0 L52.2 99.2 L52.8 99.2 L53.4 99.2 L54.1 99.0 L54.7 98.7 L55.3 98.3 L55.9 97.8 L56.5 97.2 L57.1 96.5 L57.8 95.8 L58.4 94.9 L59.0 94.0 L59.6 92.9 L60.2 91.9 L60.8 90.8 L61.5 89.6 L62.1 88.4 L62.7 87.2 L63.3 86.0 L63.9 84.7 L64.5 83.5 L65.2 82.3 L65.8 81.2 L66.4 80.1 L67.0 79.0 L67.6 78.0 L68.2 77.0 L68.9 76.2 L69.5 75.4 L70.1 74.7 L70.7 74.1 L71.3 73.6 L71.9 73.2 L72.6 72.9 L73.2 72.8 L73.8 72.7 L74.4 72.8 L75.0 72.9 L75.6 73.2 L76.2 73.5 L76.9 73.9 L77.5 74.4 L78.1 75.0 L78.7 75.7 L79.3 76.5 L79.9 77.3 L80.5 78.2 L81.1 79.1 L81.7 80.1 L82.4 81.1 L83.0 82.2 L83.6 83.3 L84.2 84.4 L84.8 85.6 L85.4 86.7 L86.0 87.8 L86.6 89.0 L87.3 90.1 L87.9 91.1 L88.5 92.2 L89.1 93.2 L89.7 94.1 L90.3 95.0 L90.9 95.8 L91.5 96.6 L92.2 97.3 L92.8 97.9 L93.4 98.4 L94.0 98.8 L94.6 99.1 L95.2 99.4 L95.8 99.5 L96.4 99.6 L97.0 99.5 L97.6 99.4 L98.3 99.1 L98.9 98.7 L99.5 98.3 L100.1 97.8 L100.7 97.1 L101.3 96.4 L101.9 95.6 L102.5 94.8 L103.1 93.8 L103.7 92.8 L104.3 91.8 L104.9 90.7 L105.5 89.6 L106.1 88.5 L106.7 87.3 L107.3 86.1 L107.9 85.0 L108.5 83.8 L109.2 82.7 L109.8 81.5 L110.4 80.5 L111.0 79.4 L111.6 78.4 L112.2 77.5 L112.8 76.7 L113.4 75.9 L114.0 75.1 L114.6 74.5 L115.2 74.0 L115.8 73.5 L116.4 73.2 L117.0 72.9 L117.6 72.8 L118.2 72.7 L118.9 72.8 L119.5 73.1 L120.1 73.6 L120.7 74.3 L121.3 75.1 L121.9 76.1 L122.6 77.1 L123.2 78.3 L123.8 79.5 L124.4 80.7 L125.0 81.9 L125.7 83.1 L126.3 84.1 L126.9 85.1 L127.5 85.9 L128.1 86.6 L128.7 87.1 L129.4 87.4 L130.0 87.5 L130.6 86.3 L131.3 83.1 L132.0 79.2 L132.7 76.1 L133.3 74.9 L133.9 75.3 L134.5 76.6 L135.1 78.7 L135.7 81.4 L136.3 84.5 L136.9 87.9 L137.5 91.3 L138.1 94.4 L138.7 97.1 L139.3 99.2 L139.9 100.5 L140.5 100.9 L141.2 100.5 L141.8 99.4 L142.4 97.6 L143.0 95.3 L143.6 92.5 L144.2 89.5 L144.8 86.3 L145.4 83.3 L146.0 80.5 L146.6 78.2 L147.2 76.4 L147.8 75.3 L148.4 74.9 L149.0 75.4 L149.6 76.9 L150.3 79.3 L150.9 82.4 L151.5 85.9 L152.1 89.6 L152.7 93.1 L153.3 96.1 L153.9 98.5 L154.5 100.0 L155.1 100.6 L155.7 100.2 L156.3 99.1 L157.0 97.3 L157.6 94.9 L158.2 92.1 L158.8 89.1 L159.4 85.9 L160.0 82.8 L160.6 80.0 L161.2 77.7 L161.8 75.9 L162.4 74.8 L163.0 74.4 L163.6 74.8 L164.3 75.9 L164.9 77.6 L165.5 79.9 L166.1 82.7 L166.7 85.7 L167.4 88.8 L168.0 91.8 L168.6 94.5 L169.2 96.8 L169.8 98.6 L170.4 99.7 L171.1 100.1 L171.9 99.2 L172.7 98.4 L173.4 98.5 L174.0 99.0 L174.6 99.5 L175.2 99.9 L175.8 100.1 L176.4 100.0 L177.0 99.9 L177.6 99.6 L178.2 99.3 L178.8 98.9 L179.4 98.4 L180.0 97.9 L180.6 97.2 L181.2 96.5 L181.8 95.7 L182.4 94.9 L183.0 94.0 L183.6 93.0 L184.2 92.0 L184.8 91.0 L185.4 89.9 L186.0 88.8 L186.6 87.7 L187.3 86.6 L187.9 85.5 L188.5 84.4 L189.1 83.3 L189.7 82.3 L190.3 81.3 L190.9 80.3 L191.5 79.3 L192.1 78.4 L192.7 77.6 L193.3 76.8 L193.9 76.1 L194.5 75.4 L195.1 74.8 L195.7 74.4 L196.3 74.0 L196.9 73.6 L197.5 73.4 L198.1 73.3 L198.7 73.2 L199.3 73.3 L200.0 73.4 L200.6 73.7 L201.2 74.0 L201.8 74.5 L202.4 75.0 L203.0 75.6 L203.6 76.3 L204.2 77.1 L204.8 77.9 L205.4 78.8 L206.0 79.8 L206.6 80.8 L207.2 81.9 L207.8 83.0 L208.4 84.1 L209.0 85.2 L209.6 86.4 L210.2 87.5 L210.9 88.7 L211.5 89.8 L212.1 90.9 L212.7 92.0 L213.3 93.0 L213.9 93.9 L214.5 94.9 L215.1 95.7 L215.7 96.5 L216.3 97.2 L216.9 97.8 L217.5 98.3 L218.1 98.8 L218.7 99.1 L219.3 99.4 L219.9 99.5 L220.5 99.6 L221.2 99.5 L221.8 99.4 L222.4 99.1 L223.0 98.8 L223.6 98.3 L224.2 97.8 L224.8 97.2 L225.4 96.5 L226.0 95.7 L226.6 94.9 L227.2 93.9 L227.8 93.0 L228.4 92.0 L229.0 90.9 L229.6 89.8 L230.2 88.7 L230.8 87.5 L231.4 86.4 L232.1 85.2 L232.7 84.1 L233.3 83.0 L233.9 81.9 L234.5 80.8 L235.1 79.8 L235.7 78.8 L236.3 77.9 L236.9 77.1 L237.5 76.3 L238.1 75.6 L238.7 75.0 L239.3 74.5 L239.9 74.0 L240.5 73.7 L241.1 73.4 L241.7 73.3 L242.3 73.2 L243.0 73.3 L243.6 73.6 L244.2 74.0 L244.8 74.6 L245.4 75.3 L246.1 76.2 L246.7 77.1 L247.3 78.2 L247.9 79.4 L248.5 80.6 L249.2 81.8 L249.8 83.1 L250.4 84.3 L251.0 85.5 L251.6 86.7 L252.3 87.8 L252.9 88.7 L253.5 89.6 L254.1 90.3 L254.7 90.9 L255.4 91.3 L256.0 91.6 L256.6 91.7 L257.3 90.5 L258.0 87.5 L258.7 83.3 L259.4 79.1 L260.1 76.0 L260.8 74.9 L261.4 75.3 L262.1 76.6 L262.7 78.7 L263.3 81.4 L263.9 84.5 L264.6 87.9 L265.2 91.3 L265.8 94.4 L266.5 97.1 L267.1 99.2 L267.7 100.5 L268.3 100.9 L269.0 100.4 L269.6 98.8 L270.3 96.4 L270.9 93.2 L271.5 89.6 L272.2 85.9 L272.8 82.3 L273.5 79.1 L274.1 76.7 L274.7 75.1 L275.4 74.6 L276.0 74.9 L276.6 76.1 L277.2 77.9 L277.9 80.3 L278.5 83.1 L279.1 86.1 L279.7 89.3 L280.3 92.4 L281.0 95.2 L281.6 97.6 L282.2 99.4 L282.8 100.5 L283.4 100.9 L284.0 100.4 L284.7 98.8 L285.3 96.4 L285.9 93.2 L286.5 89.6 L287.1 85.9 L287.7 82.3 L288.3 79.1 L288.9 76.7 L289.5 75.1 L290.1 74.6 L290.8 75.0 L291.4 76.3 L292.0 78.4 L292.7 81.1 L293.3 84.2 L293.9 87.6 L294.5 90.9 L295.2 94.1 L295.8 96.8 L296.4 98.8 L297.1 100.1 L297.7 100.6 L298.5 99.9 L299.4 99.2 L300.0 99.3 L300.6 99.6 L301.3 99.9 L301.9 100.1 L302.5 100.0 L303.1 99.8 L303.7 99.5 L304.4 99.1 L305.0 98.5 L305.6 97.9 L306.2 97.1 L306.8 96.3 L307.5 95.3 L308.1 94.3 L308.7 93.2 L309.3 92.0 L309.9 90.8 L310.5 89.6 L311.2 88.3 L311.8 87.1 L312.4 85.8 L313.0 84.5 L313.6 83.3 L314.3 82.1 L314.9 80.9 L315.5 79.8 L316.1 78.8 L316.7 77.9 L317.3 77.0 L318.0 76.3 L318.6 75.6 L319.2 75.1 L319.8 74.6 L320.4 74.3 L321.1 74.1 L321.7 74.1 L322.3 74.1 L322.9 74.3 L323.5 74.7 L324.1 75.1 L324.8 75.7 L325.4 76.4 L326.0 77.2 L326.6 78.1 L327.2 79.1 L327.8 80.1 L328.4 81.3 L329.1 82.5 L329.7 83.7 L330.3 85.0 L330.9 86.2 L331.5 87.5 L332.1 88.8 L332.7 90.0 L333.4 91.2 L334.0 92.3 L334.6 93.4 L335.2 94.4 L335.8 95.3 L336.4 96.1 L337.1 96.8 L337.7 97.3 L338.3 97.8 L338.9 98.1 L339.5 98.3 L340.1 98.4 L340.8 97.8 L341.4 96.1 L342.0 93.4 L342.7 90.1 L343.3 86.4 L343.9 82.7 L344.6 79.3 L345.2 76.7 L345.9 75.0 L346.5 74.4 L347.1 74.9 L347.8 76.5 L348.4 78.9 L349.1 82.0 L349.7 85.6 L350.3 89.3 L351.0 92.9 L351.6 96.0 L352.3 98.5 L352.9 100.0 L353.5 100.6 L354.2 100.1 L354.8 98.8 L355.4 96.7 L356.1 94.0 L356.7 90.9 L357.3 87.5 L357.9 84.1 L358.6 80.9 L359.2 78.2 L359.8 76.2 L360.5 74.8 L361.1 74.4 L361.7 74.8 L362.3 76.2 L362.9 78.2 L363.5 80.9 L364.1 84.1 L364.7 87.5 L365.3 90.9 L365.9 94.0 L366.5 96.7 L367.1 98.8 L367.7 100.1 L368.3 100.6 L368.9 100.1 L369.6 98.8 L370.2 96.7 L370.8 94.0 L371.4 90.9 L372.1 87.5 L372.7 84.1 L373.3 80.9 L374.0 78.2 L374.6 76.2 L375.2 74.8 L375.8 74.4 L376.5 74.9 L377.1 76.5 L377.8 78.9 L378.4 82.0 L379.1 85.6 L379.7 89.3 L380.3 92.9 L381.0 96.0 L381.6 98.5 L382.3 100.0 L382.9 100.6 L383.5 100.1 L384.2 98.8 L384.8 96.7 L385.4 94.0 L386.0 90.9 L386.7 87.5 L387.3 84.1 L387.9 80.9 L388.6 78.2 L389.2 76.2 L389.8 74.8 L390.4 74.4 L391.0 74.8 L391.6 76.2 L392.2 78.2 L392.8 80.9 L393.4 84.1 L394.0 87.5 L394.6 90.9 L395.2 94.0 L395.8 96.7 L396.5 98.8 L397.1 100.1 L397.7 100.6 L398.3 100.2 L398.9 99.1 L399.5 97.3 L400.1 94.9 L400.7 92.1 L401.3 89.1 L401.9 85.9 L402.5 82.8 L403.1 80.0 L403.7 77.7 L404.3 75.9 L404.9 74.8 L405.5 74.4 L406.2 74.9 L406.8 76.5 L407.5 78.9 L408.1 82.0 L408.7 85.6 L409.4 89.3 L410.0 92.9 L410.7 96.0 L411.3 98.5 L411.9 100.0 L412.6 100.6 L413.2 100.1 L413.8 98.8 L414.5 96.7 L415.1 94.0 L415.7 90.9 L416.4 87.5 L417.0 84.1 L417.6 80.9 L418.2 78.2 L418.9 76.2 L419.5 74.8 L420.1 74.4 L420.7 74.8 L421.3 76.2 L421.9 78.2 L422.5 80.9 L423.1 84.1 L423.7 87.5 L424.3 90.9 L424.9 94.0 L425.5 96.7 L426.1 98.8 L426.7 100.1 L427.3 100.6 L428.0 100.1 L428.6 98.8 L429.2 96.7 L429.9 94.0 L430.5 90.9 L431.1 87.5 L431.7 84.1 L432.4 80.9 L433.0 78.2 L433.6 76.2 L434.3 74.8 L434.9 74.4 L435.5 74.8 L436.1 76.2 L436.7 78.2 L437.3 80.9 L437.9 84.1 L438.5 87.5 L439.1 90.9 L439.7 94.0 L440.3 96.7 L440.9 98.8 L441.5 100.1 L442.1 100.6 L442.7 100.1 L443.4 98.8 L444.0 96.7 L444.6 94.0 L445.2 90.9 L445.9 87.5 L446.5 84.1 L447.1 80.9 L447.8 78.2 L448.4 76.2 L449.0 74.8 L449.6 74.4 L450.3 74.9 L450.9 76.5 L451.6 78.9 L452.2 82.0 L452.8 85.6 L453.5 89.3 L454.1 92.9 L454.8 96.0 L455.4 98.5 L456.0 100.0 L456.7 100.6 L457.3 100.1 L457.9 98.8 L458.6 96.7 L459.2 94.0 L459.8 90.9 L460.5 87.5 L461.1 84.1 L461.7 80.9 L462.3 78.2 L463.0 76.2 L463.6 74.8 L464.2 74.4 L464.8 74.8 L465.4 76.2 L466.0 78.2 L466.6 80.9 L467.2 84.1 L467.8 87.5 L468.4 90.9 L469.0 94.0 L469.6 96.7 L470.2 98.8 L470.8 100.1 L471.4 100.6 L472.1 100.1 L472.7 98.8 L473.3 96.7 L474.0 94.0 L474.6 90.9 L475.2 87.5 L475.8 84.1 L476.5 80.9 L477.1 78.2 L477.7 76.2 L478.4 74.8 L479.0 74.4 L479.6 74.8 L480.2 76.2 L480.8 78.2 L481.5 80.9 L482.1 84.1 L482.7 87.5 L483.3 90.9 L483.9 94.0 L484.5 96.7 L485.1 98.8 L485.8 100.1 L486.4 100.6 L487.0 100.1 L487.6 98.8 L488.2 96.7 L488.8 94.0 L489.4 90.9 L490.1 87.5 L490.7 84.1 L491.3 80.9 L491.9 78.2 L492.5 76.2 L493.1 74.8 L493.8 74.4 L494.4 74.8 L495.0 76.1 L495.6 78.2 L496.2 80.8 L496.8 83.9 L497.4 87.2 L498.1 90.5 L498.7 93.6 L499.3 96.3 L499.9 98.3 L500.5 99.6 L501.1 100.1 L501.8 99.7 L502.4 98.5 L503.1 96.7 L503.7 94.3 L504.4 91.4 L505.0 88.3 L505.6 85.0 L506.3 81.9 L506.9 79.0 L507.6 76.6 L508.2 74.8 L508.9 73.6 L509.5 73.2 L510.1 73.3 L510.8 73.4 L511.4 73.7 L512.0 74.1 L512.6 74.6 L513.2 75.2 L513.8 75.9 L514.5 76.7 L515.1 77.5 L515.7 78.5 L516.3 79.5 L516.9 80.5 L517.5 81.6 L518.2 82.8 L518.8 84.0 L519.4 85.2 L520.0 86.4 L520.6 87.6 L521.2 88.8 L521.8 90.0 L522.5 91.1 L523.1 92.3 L523.7 93.3 L524.3 94.3 L524.9 95.3 L525.5 96.1 L526.2 96.9 L526.8 97.6 L527.4 98.2 L528.0 98.7 L528.6 99.1 L529.2 99.3 L529.9 99.5 L530.5 99.6 L531.1 99.5 L531.7 99.4 L532.3 99.1 L532.9 98.7 L533.5 98.3 L534.1 97.8 L534.7 97.1 L535.3 96.4 L535.9 95.6 L536.5 94.8 L537.1 93.8 L537.7 92.8 L538.4 91.8 L539.0 90.7 L539.6 89.6 L540.2 88.5 L540.8 87.3 L541.4 86.1 L542.0 85.0 L542.6 83.8 L543.2 82.7 L543.8 81.5 L544.4 80.5 L545.0 79.4 L545.6 78.4 L546.2 77.5 L546.8 76.7 L547.4 75.9 L548.0 75.1 L548.7 74.5 L549.3 74.0 L549.9 73.5 L550.5 73.2 L551.1 72.9 L551.7 72.8 L552.3 72.7 L552.9 72.8 L553.5 72.9 L554.1 73.2 L554.7 73.5 L555.3 73.9 L556.0 74.5 L556.6 75.1 L557.2 75.8 L557.8 76.5 L558.4 77.4 L559.0 78.3 L559.6 79.2 L560.2 80.2 L560.9 81.3 L561.5 82.4 L562.1 83.5 L562.7 84.7 L563.3 85.8 L563.9 87.0 L564.5 88.1 L565.1 89.3 L565.7 90.4 L566.4 91.5 L567.0 92.5 L567.6 93.6 L568.2 94.5 L568.8 95.4 L569.4 96.3 L570.0 97.0 L570.6 97.7 L571.3 98.3 L571.9 98.8 L572.5 99.3 L573.1 99.6 L573.7 99.9 L574.3 100.0 L574.9 100.1 L575.5 100.0 L576.1 99.8 L576.7 99.4 L577.4 98.9 L578.0 98.3 L578.6 97.5 L579.2 96.7 L579.8 95.7 L580.4 94.6 L581.0 93.5 L581.6 92.3 L582.2 91.0 L582.8 89.7 L583.4 88.4 L584.0 87.1 L584.6 85.7 L585.2 84.4 L585.9 83.2 L586.5 82.0 L587.1 80.8 L587.7 79.8 L588.3 78.8 L588.9 77.9 L589.5 77.2 L590.1 76.5 L590.7 76.0 L591.3 75.7 L591.9 75.5 L592.5 75.4 L593.2 76.1 L593.8 78.2 L594.5 81.4 L595.1 85.2 L595.8 89.4 L596.5 93.3 L597.1 96.4 L597.8 98.5 L598.4 99.2 L599.0 98.8 L599.6 97.7 L600.3 95.8 L600.9 93.4 L601.5 90.6 L602.1 87.4 L602.7 84.2 L603.4 81.0 L604.0 78.2 L604.6 75.8 L605.2 73.9 L605.8 72.8 L606.5 72.4 L607.1 72.9 L607.7 74.5 L608.4 77.0 L609.0 80.2 L609.7 83.9 L610.3 87.7 L610.9 91.4 L611.6 94.6 L612.2 97.1 L612.9 98.7 L613.5 99.2 L614.1 98.8 L614.8 97.5 L615.4 95.4 L616.0 92.7 L616.6 89.6 L617.3 86.2 L617.9 82.9 L618.5 79.7 L619.2 77.0 L619.8 75.0 L620.4 73.7 L621.0 73.2 L621.6 73.7 L622.3 75.0 L622.9 77.0 L623.5 79.7 L624.1 82.9 L624.7 86.2 L625.3 89.6 L625.9 92.7 L626.5 95.4 L627.1 97.5 L627.7 98.8 L628.3 99.2 L628.9 98.8 L629.5 97.5 L630.1 95.4 L630.7 92.7 L631.3 89.6 L631.9 86.2 L632.6 82.9 L633.2 79.7 L633.8 77.0 L634.4 75.0 L635.0 73.7 L635.6 73.2 L636.3 73.7 L636.9 75.0 L637.5 77.1 L638.1 79.8 L638.7 83.0 L639.3 86.4 L639.9 89.8 L640.6 93.0 L641.2 95.7 L641.8 97.8 L642.4 99.1 L643.0 99.6 L643.6 99.1 L644.2 97.8 L644.9 95.6 L645.5 92.8 L646.1 89.6 L646.7 86.1 L647.3 82.7 L647.9 79.4 L648.6 76.7 L649.2 74.5 L649.8 73.2 L650.4 72.7 L651.0 73.2 L651.6 74.5 L652.2 76.7 L652.8 79.4 L653.4 82.7 L654.0 86.1 L654.6 89.6 L655.2 92.8 L655.8 95.6 L656.4 97.8 L657.0 99.1 L657.6 99.6 L658.2 99.1 L658.9 97.8 L659.5 95.6 L660.1 92.8 L660.8 89.6 L661.4 86.1 L662.0 82.7 L662.6 79.4 L663.3 76.7 L663.9 74.5 L664.5 73.2 L665.2 72.7 L665.8 73.2 L666.4 74.5 L667.0 76.7 L667.7 79.4 L668.3 82.7 L668.9 86.1 L669.6 89.6 L670.2 92.8 L670.8 95.6 L671.4 97.8 L672.1 99.1 L672.7 99.6 L673.4 98.6 L674.0 96.0 L674.6 92.1 L675.3 87.9 L675.9 84.0 L676.6 81.4 L677.2 80.4 L677.8 80.5 L678.5 80.9 L679.1 81.4 L679.7 82.1 L680.3 83.1 L680.9 84.1 L681.5 85.3 L682.1 86.6 L682.7 88.0 L683.4 89.4 L684.0 90.8 L684.6 92.2 L685.2 93.5 L685.8 94.7 L686.4 95.8 L687.0 96.7 L687.6 97.4 L688.3 97.9 L688.9 98.3 L689.5 98.4 L690.1 98.3 L690.7 98.2 L691.3 98.0 L691.9 97.6 L692.5 97.2 L693.1 96.7 L693.8 96.1 L694.4 95.5 L695.0 94.7 L695.6 93.9 L696.2 93.0 L696.8 92.1 L697.4 91.1 L698.0 90.1 L698.7 89.1 L699.3 88.0 L699.9 86.9 L700.5 85.8 L701.1 84.7 L701.7 83.5 L702.3 82.4 L702.9 81.4 L703.6 80.3 L704.2 79.3 L704.8 78.3 L705.4 77.4 L706.0 76.5 L706.6 75.7 L707.2 75.0 L707.8 74.3 L708.4 73.7 L709.1 73.2 L709.7 72.8 L710.3 72.5 L710.9 72.2 L711.5 72.1 L712.1 72.1 L712.7 72.1 L713.3 72.3 L713.9 72.5 L714.5 72.9 L715.1 73.3 L715.8 73.9 L716.4 74.5 L717.0 75.2 L717.6 76.0 L718.2 76.9 L718.8 77.8 L719.4 78.8 L720.0 79.9 L720.6 81.0 L721.2 82.1 L721.8 83.3 L722.4 84.5 L723.0 85.6 L723.6 86.8 L724.2 88.0 L724.8 89.2 L725.4 90.3 L726.0 91.4 L726.7 92.4 L727.3 93.4 L727.9 94.4 L728.5 95.2 L729.1 96.0 L729.7 96.8 L730.3 97.4 L730.9 97.9 L731.5 98.4 L732.1 98.8 L732.7 99.0 L733.3 99.2 L733.9 99.2 L734.5 99.2 L735.1 99.0 L735.7 98.8 L736.3 98.4 L736.9 97.9 L737.6 97.4 L738.2 96.8 L738.8 96.0 L739.4 95.2 L740.0 94.4 L740.6 93.4 L741.2 92.4 L741.8 91.4 L742.4 90.3 L743.0 89.2 L743.6 88.0 L744.2 86.8 L744.8 85.6 L745.4 84.5 L746.0 83.3 L746.6 82.1 L747.2 81.0 L747.8 79.9 L748.5 78.8 L749.1 77.8 L749.7 76.9 L750.3 76.0 L750.9 75.2 L751.5 74.5 L752.1 73.9 L752.7 73.3 L753.3 72.9 L753.9 72.5 L754.5 72.3 L755.1 72.1 L755.7 72.1 L756.3 72.1 L756.9 72.3 L757.5 72.5 L758.1 72.9 L758.8 73.3 L759.4 73.9 L760.0 74.5 L760.6 75.3 L761.2 76.1 L761.8 77.0 L762.4 77.9 L763.0 78.9 L763.6 80.0 L764.2 81.1 L764.8 82.2 L765.4 83.4 L766.0 84.6 L766.6 85.8 L767.2 87.0 L767.8 88.2 L768.4 89.4 L769.0 90.5 L769.7 91.6 L770.3 92.7 L770.9 93.7 L771.5 94.6 L772.1 95.5 L772.7 96.3 L773.3 97.1 L773.9 97.7 L774.5 98.3 L775.1 98.7 L775.7 99.1 L776.3 99.3 L776.9 99.5 L777.5 99.6 L778.1 99.5 L778.7 99.4 L779.3 99.1 L779.9 98.8 L780.6 98.3 L781.2 97.8 L781.8 97.2 L782.4 96.5 L783.0 95.7 L783.6 94.9 L784.2 93.9 L784.8 93.0 L785.4 92.0 L786.0 90.9 L786.6 89.8 L787.2 88.7 L787.8 87.5 L788.4 86.4 L789.0 85.2 L789.6 84.1 L790.2 83.0 L790.9 81.9 L791.5 80.8 L792.1 79.8 L792.7 78.8 L793.3 77.9 L793.9 77.1 L794.5 76.3 L795.1 75.6 L795.7 75.0 L796.3 74.5 L796.9 74.0 L797.5 73.7 L798.1 73.4 L798.7 73.3 L799.3 73.2 L800.0 73.3 L800.6 73.4 L801.3 73.5 L801.9 73.7 L802.6 73.9 L803.2 74.1 L803.9 74.3 L804.5 74.4 L805.2 74.4 L805.8 75.0 L806.4 76.8 L807.1 79.7 L807.7 83.3 L808.3 87.2 L808.9 91.2 L809.5 94.8 L810.2 97.6 L810.8 99.4 L811.4 100.1 L812.0 99.6 L812.7 98.3 L813.3 96.1 L814.0 93.4 L814.6 90.1 L815.3 86.6 L815.9 83.2 L816.5 79.9 L817.2 77.2 L817.8 75.0 L818.5 73.7 L819.1 73.2 L819.8 73.8 L820.4 75.4 L821.0 77.9 L821.7 81.1 L822.3 84.7 L823.0 88.6 L823.6 92.2 L824.2 95.4 L824.9 97.9 L825.5 99.5 L826.2 100.1 L826.8 99.7 L827.4 98.5 L828.0 96.7 L828.6 94.3 L829.2 91.4 L829.8 88.3 L830.4 85.0 L831.0 81.9 L831.6 79.0 L832.2 76.6 L832.8 74.8 L833.4 73.6 L834.0 73.2 L834.6 73.7 L835.2 75.0 L835.8 77.2 L836.5 79.9 L837.1 83.2 L837.7 86.6 L838.3 90.1 L838.9 93.4 L839.5 96.1 L840.1 98.3 L840.7 99.6 L841.3 100.1 L841.9 99.1 L842.6 96.5 L843.3 92.7 L843.9 88.5 L844.6 84.7 L845.3 82.0 L846.0 81.1 L846.6 81.2 L847.2 81.6 L847.8 82.3 L848.5 83.1 L849.1 84.2 L849.7 85.4 L850.3 86.8 L850.9 88.2 L851.6 89.7 L852.2 91.2 L852.8 92.7 L853.4 94.1 L854.1 95.3 L854.7 96.4 L855.3 97.2 L855.9 97.9 L856.6 98.3 L857.2 98.4 L857.8 98.3 L858.4 98.2 L859.0 97.9 L859.6 97.6 L860.2 97.1 L860.8 96.6 L861.4 96.0 L862.0 95.3 L862.6 94.5 L863.2 93.7 L863.9 92.8 L864.5 91.8 L865.1 90.8 L865.7 89.7 L866.3 88.6 L866.9 87.5 L867.5 86.4 L868.1 85.2 L868.7 84.1 L869.3 82.9 L869.9 81.8 L870.5 80.7 L871.1 79.7 L871.7 78.6 L872.3 77.7 L872.9 76.8 L873.5 75.9 L874.1 75.1 L874.8 74.4 L875.4 73.8 L876.0 73.3 L876.6 72.8 L877.2 72.5 L877.8 72.3 L878.4 72.1 L879.0 72.1 L879.6 72.1 L880.2 72.3 L880.8 72.5 L881.4 72.9 L882.0 73.3 L882.6 73.9 L883.2 74.5 L883.8 75.3 L884.4 76.1 L885.1 77.0 L885.7 77.9 L886.3 78.9 L886.9 80.0 L887.5 81.1 L888.1 82.2 L888.7 83.4 L889.3 84.6 L889.9 85.8 L890.5 87.0 L891.1 88.2 L891.7 89.4 L892.3 90.5 L892.9 91.6 L893.5 92.7 L894.1 93.7 L894.7 94.6 L895.3 95.5 L896.0 96.3 L896.6 97.1 L897.2 97.7 L897.8 98.3 L898.4 98.7 L899.0 99.1 L899.6 99.3 L900.2 99.5 L900.8 99.6 L901.4 99.5 L902.0 99.4 L902.6 99.1 L903.2 98.8 L903.9 98.3 L904.5 97.8 L905.1 97.2 L905.7 96.5 L906.3 95.8 L906.9 94.9 L907.5 94.0 L908.1 93.1 L908.8 92.1 L909.4 91.0 L910.0 89.9 L910.6 88.8 L911.2 87.7 L911.8 86.5 L912.4 85.4 L913.0 84.2 L913.6 83.1 L914.3 82.0 L914.9 80.9 L915.5 79.9 L916.1 78.8 L916.7 77.9 L917.3 77.0 L917.9 76.2 L918.5 75.4 L919.2 74.7 L919.8 74.1 L920.4 73.6 L921.0 73.2 L921.6 72.8 L922.2 72.6 L922.8 72.4 L923.4 72.4 L924.0 72.5 L924.7 72.8 L925.3 73.2 L925.9 73.8 L926.5 74.4 L927.1 75.1 L927.7 75.7 L928.3 76.3 L928.9 76.7 L929.5 77.0 L930.1 77.1 L930.8 76.7 L931.4 75.7 L932.0 74.8 L932.7 74.4 L933.3 75.2 L934.0 77.5 L934.6 80.9 L935.3 85.2 L935.9 89.8 L936.6 94.0 L937.2 97.5 L937.9 99.8 L938.5 100.6 L939.2 100.2 L939.8 99.0 L940.4 97.2 L941.0 94.8 L941.6 92.0 L942.2 88.9 L942.9 85.7 L943.5 82.6 L944.1 79.8 L944.7 77.4 L945.3 75.6 L946.0 74.4 L946.6 74.1 L947.2 74.6 L947.9 76.2 L948.5 78.6 L949.1 81.8 L949.8 85.4 L950.4 89.2 L951.1 92.8 L951.7 96.0 L952.3 98.5 L953.0 100.0 L953.6 100.6 L954.2 100.1 L954.8 98.8 L955.4 96.7 L956.0 94.0 L956.6 90.9 L957.2 87.5 L957.8 84.1 L958.4 80.9 L959.0 78.2 L959.6 76.2 L960.2 74.8 L960.8 74.4 L961.4 74.8 L962.0 76.1 L962.6 78.2 L963.2 80.8 L963.8 83.9 L964.4 87.2 L965.0 90.5 L965.6 93.6 L966.2 96.3 L966.8 98.3 L967.4 99.6 L968.1 100.1 L968.7 99.5 L969.3 97.8 L970.0 95.3 L970.6 92.6 L971.3 90.1 L971.9 88.4 L972.6 87.8 L973.2 88.0 L973.9 88.4 L974.5 89.2 L975.2 90.2 L975.8 91.4 L976.4 92.7 L977.1 94.0 L977.7 95.3 L978.4 96.5 L979.0 97.5 L979.7 98.3 L980.3 98.7 L981.0 98.9 L981.6 98.8 L982.2 98.7 L982.8 98.4 L983.4 98.1 L984.0 97.6 L984.6 97.1 L985.2 96.5 L985.8 95.7 L986.4 95.0 L987.0 94.1 L987.6 93.2 L988.2 92.2 L988.8 91.1 L989.4 90.1 L990.0 88.9 L990.7 87.8 L991.3 86.6 L991.9 85.5 L992.5 84.3 L993.1 83.1 L993.7 82.0 L994.3 80.9 L994.9 79.8 L995.5 78.8 L996.1 77.8 L996.7 76.8 L997.3 76.0 L997.9 75.2 L998.5 74.5 L999.1 73.8 L999.7 73.3 L1000.3 72.9 L1001.0 72.5 L1001.6 72.3 L1002.2 72.1 L1002.8 72.1 L1003.4 72.2 L1004.0 72.5 L1004.6 72.9 L1005.3 73.6 L1005.9 74.4 L1006.5 75.4 L1007.1 76.5 L1007.8 77.6 L1008.4 78.8 L1009.0 79.9 L1009.6 81.1 L1010.3 82.1 L1010.9 83.1 L1011.5 83.9 L1012.1 84.6 L1012.8 85.1 L1013.4 85.4 L1014.0 85.5 L1014.7 84.5 L1015.3 81.8 L1016.0 78.6 L1016.7 75.9 L1017.4 74.9 L1018.0 75.3 L1018.6 76.6 L1019.2 78.7 L1019.8 81.3 L1020.4 84.4 L1021.0 87.7 L1021.6 91.1 L1022.2 94.1 L1022.8 96.8 L1023.4 98.8 L1024.0 100.1 L1024.6 100.6 L1025.2 100.1 L1025.8 98.8 L1026.5 96.7 L1027.1 94.0 L1027.7 90.9 L1028.3 87.5 L1029.0 84.1 L1029.6 80.9 L1030.2 78.2 L1030.9 76.2 L1031.5 74.8 L1032.1 74.4 L1032.7 74.8 L1033.3 76.2 L1033.9 78.2 L1034.5 80.9 L1035.1 84.1 L1035.7 87.5 L1036.3 90.9 L1036.9 94.0 L1037.5 96.7 L1038.1 98.8 L1038.7 100.1 L1039.3 100.6 L1040.0 100.1 L1040.6 98.8 L1041.2 96.7 L1041.8 94.0 L1042.5 90.9 L1043.1 87.5 L1043.7 84.1 L1044.4 80.9 L1045.0 78.2 L1045.6 76.2 L1046.2 74.8 L1046.9 74.4 L1047.5 74.9 L1048.2 76.5 L1048.8 78.9 L1049.4 82.0 L1050.1 85.6 L1050.7 89.3 L1051.4 92.9 L1052.0 96.0 L1052.6 98.5 L1053.3 100.0 L1053.9 100.6 L1054.5 100.1 L1055.2 98.8 L1055.8 96.7 L1056.4 94.0 L1057.1 90.9 L1057.7 87.5 L1058.3 84.1 L1059.0 80.9 L1059.6 78.2 L1060.2 76.2 L1060.8 74.8 L1061.5 74.4 L1062.1 74.8 L1062.7 76.2 L1063.3 78.2 L1063.9 80.9 L1064.5 84.1 L1065.1 87.5 L1065.7 90.9 L1066.3 94.0 L1066.9 96.7 L1067.5 98.8 L1068.1 100.1 L1068.7 100.6 L1069.3 100.1 L1069.9 98.8 L1070.6 96.7 L1071.2 94.0 L1071.8 90.9 L1072.5 87.5 L1073.1 84.1 L1073.7 80.9 L1074.3 78.2 L1075.0 76.2 L1075.6 74.8 L1076.2 74.4 L1076.9 74.9 L1077.5 76.5 L1078.1 78.9 L1078.8 82.0 L1079.4 85.6 L1080.1 89.3 L1080.7 92.9 L1081.3 96.0 L1082.0 98.5 L1082.6 100.0 L1083.3 100.6 L1083.9 100.1 L1084.5 98.8 L1085.2 96.7 L1085.8 94.0 L1086.4 90.9 L1087.0 87.5 L1087.7 84.1 L1088.3 80.9 L1088.9 78.2 L1089.6 76.2 L1090.2 74.8 L1090.8 74.4 L1091.4 74.8 L1092.0 76.2 L1092.6 78.2 L1093.2 80.9 L1093.8 84.1 L1094.4 87.5 L1095.0 90.9 L1095.6 94.0 L1096.2 96.7 L1096.8 98.8 L1097.4 100.1 L1098.0 100.6 L1098.7 100.1 L1099.3 98.8 L1099.9 96.6 L1100.5 93.9 L1101.2 90.6 L1101.8 87.1 L1102.4 83.7 L1103.1 80.4 L1103.7 77.7 L1104.3 75.5 L1104.9 74.2 L1105.6 73.7 L1106.2 74.2 L1106.8 75.5 L1107.4 77.6 L1108.0 80.3 L1108.7 83.5 L1109.3 86.9 L1109.9 90.3 L1110.5 93.5 L1111.1 96.2 L1111.7 98.3 L1112.3 99.6 L1113.0 100.1 L1113.6 99.6 L1114.2 98.3 L1114.8 96.1 L1115.5 93.4 L1116.1 90.1 L1116.7 86.6 L1117.4 83.2 L1118.0 79.9 L1118.6 77.2 L1119.2 75.0 L1119.9 73.7 L1120.5 73.2 L1121.1 73.7 L1121.7 75.0 L1122.3 77.2 L1122.9 79.9 L1123.5 83.2 L1124.1 86.6 L1124.7 90.1 L1125.3 93.4 L1125.9 96.1 L1126.5 98.3 L1127.1 99.6 L1127.7 100.1 L1128.3 99.6 L1129.0 98.3 L1129.6 96.1 L1130.2 93.4 L1130.9 90.1 L1131.5 86.6 L1132.1 83.2 L1132.7 79.9 L1133.4 77.2 L1134.0 75.0 L1134.6 73.7 L1135.3 73.2 L1135.9 73.8 L1136.5 75.6 L1137.1 78.4 L1137.7 81.7 L1138.3 85.3 L1139.0 88.7 L1139.6 91.4 L1140.2 93.2 L1140.8 93.9 L1141.4 93.7 L1142.0 93.4 L1142.6 92.9 L1143.3 92.2 L1143.9 91.3 L1144.5 90.3 L1145.1 89.1 L1145.7 87.8 L1146.3 86.5 L1146.9 85.1 L1147.6 83.7 L1148.2 82.3 L1148.8 80.9 L1149.4 79.6 L1150.0 78.5 L1150.6 77.4 L1151.3 76.5 L1151.9 75.8 L1152.5 75.3 L1153.1 75.0 L1153.7 74.9 L1154.3 74.9 L1154.9 75.1 L1155.5 75.3 L1156.2 75.6 L1156.8 76.1 L1157.4 76.6 L1158.0 77.1 L1158.6 77.8 L1159.2 78.5 L1159.8 79.3 L1160.4 80.2 L1161.1 81.1 L1161.7 82.0 L1162.3 83.1 L1162.9 84.1 L1163.5 85.2 L1164.1 86.2 L1164.7 87.3 L1165.3 88.5 L1165.9 89.6 L1166.6 90.6 L1167.2 91.7 L1167.8 92.7 L1168.4 93.8 L1169.0 94.7 L1169.6 95.6 L1170.2 96.5 L1170.8 97.3 L1171.5 98.0 L1172.1 98.7 L1172.7 99.2 L1173.3 99.7 L1173.9 100.2 L1174.5 100.5 L1175.1 100.7 L1175.7 100.9 L1176.4 100.9 L1177.0 100.8 L1177.6 100.7 L1178.2 100.4 L1178.8 100.1 L1179.4 99.6 L1180.0 99.1 L1180.6 98.5 L1181.2 97.8 L1181.8 97.0 L1182.4 96.1 L1183.0 95.2 L1183.6 94.2 L1184.2 93.2 L1184.8 92.1 L1185.4 91.0 L1186.0 89.8 L1186.6 88.6 L1187.3 87.5 L1187.9 86.3 L1188.5 85.2 L1189.1 84.0 L1189.7 82.9 L1190.3 81.8 L1190.9 80.8 L1191.5 79.8 L1192.1 78.9 L1192.7 78.0 L1193.3 77.2 L1193.9 76.5 L1194.5 75.9 L1195.1 75.3 L1195.7 74.9 L1196.3 74.5 L1196.9 74.3 L1197.5 74.1 L1198.2 74.1 L1198.8 74.1 L1199.4 74.3 L1200.0 74.5 L1200.6 74.9 L1201.2 75.3 L1201.8 75.8 L1202.4 76.5 L1203.0 77.2 L1203.6 77.9 L1204.2 78.8 L1204.8 79.7 L1205.4 80.7 L1206.0 81.7 L1206.6 82.8 L1207.2 83.9 L1207.8 85.0 L1208.5 86.2 L1209.1 87.3 L1209.7 88.5 L1210.3 89.6 L1210.9 90.7 L1211.5 91.8 L1212.1 92.9 L1212.7 93.9 L1213.3 94.9 L1213.9 95.8 L1214.5 96.7 L1215.1 97.5 L1215.7 98.2 L1216.3 98.8 L1216.9 99.3 L1217.5 99.8 L1218.1 100.1 L1218.7 100.4 L1219.4 100.5 L1220.0 100.6 L1220.6 100.5 L1221.2 100.4 L1221.8 100.1 L1222.4 99.8 L1223.0 99.3 L1223.6 98.8 L1224.2 98.1 L1224.8 97.4 L1225.4 96.6 L1226.0 95.8 L1226.6 94.8 L1227.2 93.9 L1227.8 92.8 L1228.4 91.7 L1229.0 90.6 L1229.6 89.5 L1230.3 88.3 L1230.9 87.1 L1231.5 86.0 L1232.1 84.8 L1232.7 83.7 L1233.3 82.6 L1233.9 81.5 L1234.5 80.4 L1235.1 79.4 L1235.7 78.5 L1236.3 77.7 L1236.9 76.9 L1237.5 76.2 L1238.1 75.5 L1238.7 75.0 L1239.3 74.5 L1239.9 74.2 L1240.5 73.9 L1241.2 73.8 L1241.8 73.7 L1242.4 73.8 L1243.0 73.9 L1243.6 74.2 L1244.2 74.5 L1244.8 75.0 L1245.5 75.5 L1246.1 76.2 L1246.7 76.9 L1247.3 77.7 L1247.9 78.5 L1248.5 79.4 L1249.1 80.4 L1249.8 81.5 L1250.4 82.6 L1251.0 83.7 L1251.6 84.8 L1252.2 86.0 L1252.8 87.1 L1253.4 88.3 L1254.1 89.5 L1254.7 90.6 L1255.3 91.7 L1255.9 92.8 L1256.5 93.9 L1257.1 94.8 L1257.7 95.8 L1258.4 96.6 L1259.0 97.4 L1259.6 98.1 L1260.2 98.8 L1260.8 99.3 L1261.4 99.8 L1262.1 100.1 L1262.7 100.4 L1263.3 100.5 L1263.9 100.6 L1264.5 100.5 L1265.1 100.2 L1265.7 99.7 L1266.3 99.1 L1266.9 98.4 L1267.5 97.6 L1268.2 96.6 L1268.8 95.7 L1269.4 94.7 L1270.0 93.8 L1270.6 93.0 L1271.2 92.3 L1271.8 91.7 L1272.4 91.2 L1273.0 90.9 L1273.6 90.8" fill="none" stroke="#000" stroke-width="1.05" stroke-linejoin="round"/></svg>
<div style="left:548px;top:236px;width:1275px;height:14px;background:linear-gradient(#e5e3e0 80%,#e2dedb);border-top:1px solid #c2beb9;"></div>
<div style="left:1662px;top:236px;width:28px;height:14px;background:linear-gradient(#fefefe,#f4f2f0);border-left:1px solid #c6c2bc;border-right:1px solid #c6c2bc;border-top:1px solid #cfcbc6;"></div>
<div style="left:548px;top:236px;width:14px;height:14px;background:linear-gradient(#fbfaf9,#efece9);border-right:1px solid #c6c2bc;border-top:1px solid #cfcbc6;"></div>
<div style="left:1809px;top:236px;width:14px;height:14px;background:linear-gradient(#fbfaf9,#efece9);border-left:1px solid #c6c2bc;border-top:1px solid #cfcbc6;"></div>
<svg class="a" style="left:548px;top:236px" width="14" height="14" viewBox="0 0 14 14"><path d="M9.2 3.6 L4.6 7.4 L9.2 11.2 Z" fill="#4a4a4a"/></svg>
<svg class="a" style="left:1809px;top:236px" width="14" height="14" viewBox="0 0 14 14"><path d="M5.4 3.6 L10 7.4 L5.4 11.2 Z" fill="#4a4a4a"/></svg>
<div style="left:548px;top:480px;width:1275px;height:3px;background:#f08a8a;"></div>
<div style="left:548px;top:477px;width:1275px;height:3px;background:#0a0505;"></div>
<svg class="a" style="left:548px;top:393px" width="1275" height="174" viewBox="0 0 1275 174"><path d="M65.0 6.5 L66.5 8.7 L68.0 7.7 L69.5 8.3 L71.0 6.3 L72.5 8.9 L72.5 165.0 L71.0 166.4 L69.5 163.7 L68.0 164.9 L66.5 165.6 L65.0 163.5 Z" fill="#000"/><path d="M71.5 2.6 L73.0 4.2 L74.5 2.8 L76.0 4.8 L77.5 3.8 L77.5 169.7 L76.0 168.7 L74.5 167.7 L73.0 168.8 L71.5 168.1 Z" fill="#000"/><path d="M82.0 26.3 L83.8 23.2 L85.7 25.9 L87.5 25.3 L87.5 147.9 L85.7 146.4 L83.8 148.7 L82.0 145.7 Z" fill="#000"/><path d="M1028.5 44.8 L1030.0 45.3 L1031.6 46.2 L1033.1 44.0 L1034.6 44.9 L1036.2 47.5 L1037.7 46.9 L1039.2 46.2 L1040.8 46.2 L1042.3 45.8 L1042.3 125.4 L1040.8 125.0 L1039.2 127.5 L1037.7 126.3 L1036.2 126.4 L1034.6 127.2 L1033.1 125.1 L1031.6 127.8 L1030.0 125.9 L1028.5 126.1 Z" fill="#ffff00"/><path d="M1042.3 6.8 L1043.9 7.4 L1045.6 6.2 L1047.2 9.2 L1047.2 165.2 L1045.6 166.6 L1043.9 167.5 L1042.3 167.6 Z" fill="#000"/><path d="M1067.5 8.2 L1069.1 8.8 L1070.8 8.6 L1072.4 6.1 L1074.0 9.3 L1074.0 161.7 L1072.4 162.4 L1070.8 160.8 L1069.1 160.7 L1067.5 161.4 Z" fill="#f4a460"/><path d="M1068.5 11.0 L1070.7 0.5 L1073.0 11.0 Z" fill="#f4a460"/><path d="M1068.0 159.0 L1070.7 170.0 L1073.5 159.0 Z" fill="#f4a460"/><path d="M1075.5 46.8 L1077.7 45.7 L1079.9 44.0 L1079.9 125.7 L1077.7 127.1 L1075.5 125.1 Z" fill="#000"/><path d="M1084.0 45.1 L1085.6 46.3 L1087.3 45.9 L1088.9 44.2 L1090.6 44.1 L1092.2 44.2 L1092.2 127.7 L1090.6 126.5 L1088.9 126.2 L1087.3 126.7 L1085.6 127.7 L1084.0 127.5 Z" fill="#000"/><path d="M1095.0 6.8 L1096.6 6.4 L1098.1 6.3 L1099.7 9.5 L1099.7 167.3 L1098.1 167.1 L1096.6 165.5 L1095.0 164.6 Z" fill="#000"/><path d="M1107.8 2.1 L1109.6 1.0 L1111.4 0.5 L1113.3 3.6 L1115.1 2.4 L1115.1 169.3 L1113.3 171.2 L1111.4 169.7 L1109.6 168.5 L1107.8 170.2 Z" fill="#000"/><path d="M1117.0 46.0 L1119.1 46.0 L1121.2 46.8 L1121.2 125.1 L1119.1 127.3 L1117.0 126.5 Z" fill="#000"/><path d="M1175.7 45.6 L1177.4 47.2 L1179.1 45.8 L1180.7 44.6 L1182.4 46.2 L1184.1 44.3 L1184.1 126.9 L1182.4 125.2 L1180.7 126.2 L1179.1 125.9 L1177.4 126.4 L1175.7 126.0 Z" fill="#000"/><path d="M1184.8 3.7 L1186.4 4.3 L1188.0 2.0 L1189.6 3.0 L1189.6 166.8 L1188.0 168.3 L1186.4 169.1 L1184.8 167.3 Z" fill="#000"/><path d="M1195.9 1.9 L1197.7 3.4 L1199.6 1.7 L1201.4 1.5 L1203.2 3.6 L1203.2 171.0 L1201.4 170.7 L1199.6 170.7 L1197.7 168.5 L1195.9 169.1 Z" fill="#000"/><path d="M1204.7 44.4 L1206.2 46.3 L1207.7 44.9 L1209.2 46.6 L1209.2 125.7 L1207.7 127.1 L1206.2 124.7 L1204.7 125.5 Z" fill="#000"/></svg>
<div style="left:548px;top:568px;width:1275px;height:14px;background:linear-gradient(#e5e3e0 80%,#e2dedb);border-top:1px solid #c2beb9;"></div>
<div style="left:562px;top:568px;width:1039px;height:14px;background:linear-gradient(#fefefe,#f4f2f0);border-left:1px solid #c6c2bc;border-right:1px solid #c6c2bc;border-top:1px solid #cfcbc6;"></div>
<div style="left:548px;top:568px;width:14px;height:14px;background:linear-gradient(#fbfaf9,#efece9);border-right:1px solid #c6c2bc;border-top:1px solid #cfcbc6;"></div>
<div style="left:1809px;top:568px;width:14px;height:14px;background:linear-gradient(#fbfaf9,#efece9);border-left:1px solid #c6c2bc;border-top:1px solid #cfcbc6;"></div>
<svg class="a" style="left:548px;top:568px" width="14" height="14" viewBox="0 0 14 14"><path d="M9.2 3.6 L4.6 7.4 L9.2 11.2 Z" fill="#4a4a4a"/></svg>
<svg class="a" style="left:1809px;top:568px" width="14" height="14" viewBox="0 0 14 14"><path d="M5.4 3.6 L10 7.4 L5.4 11.2 Z" fill="#4a4a4a"/></svg>
<div style="left:548px;top:285px;width:1329px;height:84px;background:#fff;border:1px solid #ada9a4;overflow:hidden;"></div>
<div style="left:549px;top:286px;width:1313px;height:82px;overflow:hidden;"><div style="left:-549px;top:-286px;width:1908px;height:1090px;">
<span class="m" style="left:553px;top:279px;">aaaaaaaa67686768fc99ff1598fbf [<b>Pause:</b> 55291 samples]</span>
<span class="m" style="left:553px;top:294px;">aaaaaaaa67686768ecc16de20f0c2844d97ad239735619b455caf2955bf9f [<b>Pause:</b> 13176 samples]</span>
<div style="left:615.4px;top:308px;width:39px;height:15px;background:#3584c6;"></div>
<span class="m" style="left:553px;top:309px;">aaaaaaaa<span style="color:#fff">67686</span>768fcfa7da910d20 [<b>Pause:</b> 110039 samples]</span>
<span class="m" style="left:553px;top:324px;">aaaaaaaa67686768ebc16d818db64bc6637ade5b6104c4baaa47132c6c3ba38 [<b>Pause:</b> 13602 samples]</span>
<span class="m" style="left:553px;top:339px;">aaaaaaaa67686768e8816de20f0c2844d97ad2397408e1f8f88d77c5466c5c8ca37e7 [<b>Pause:</b> 12133 samples]</span>
<span class="m" style="left:553px;top:354px;">aaaaaaaa67686768fcfa7da910d20 [<b>Pause:</b> 1049346 samples]</span>
</div></div>
<div style="left:1862px;top:286px;width:14px;height:82px;background:#e2dfdb;border-left:1px solid #c6c2bc;"></div>
<div style="left:1862px;top:327px;width:14px;height:28px;background:linear-gradient(90deg,#fefefe,#f3f1ee);border-left:1px solid #c6c2bc;border-top:1px solid #c6c2bc;border-bottom:1px solid #c6c2bc;"></div>
<div style="left:1862px;top:286px;width:14px;height:14px;background:linear-gradient(90deg,#fcfbfa,#f1eeeb);border-left:1px solid #c6c2bc;border-bottom:1px solid #c6c2bc;"></div>
<div style="left:1862px;top:354px;width:14px;height:14px;background:linear-gradient(90deg,#fcfbfa,#f1eeeb);border-left:1px solid #c6c2bc;border-top:1px solid #c6c2bc;"></div>
<svg class="a" style="left:1862px;top:286px" width="14" height="14" viewBox="0 0 14 14"><path d="M3.4 9.4 L7.6 5 L11.8 9.4 Z" fill="#4a4a4a"/></svg>
<svg class="a" style="left:1862px;top:354px" width="14" height="14" viewBox="0 0 14 14"><path d="M3.4 5 L7.6 9.4 L11.8 5 Z" fill="#4a4a4a"/></svg>
<div style="left:548px;top:617px;width:1329px;height:84px;background:#fff;border:1px solid #ada9a4;"></div>
<div style="left:553px;top:682px;width:1305px;height:18px;background:#ffff00;"></div>
<span class="m" style="left:553px;top:623px;">10101010101010101010101010101010100110100111110110011010011111011101001001100001011011010111101011101101100001100011101101101011100101000111101011010011001110010011000</span>
<span class="m" style="left:553px;top:638px;">01010011101000001111111101000111001110000111101001001110101101101000011011011010101000110110100010101100111000110101000101011111100110100110010000001100100110100010001</span>
<span class="m" style="left:553px;top:653px;">0010010011110111011001001111101110011000101111101010001010110111001000011011001000110010000110011011001001101110100 [<b>Pause:</b> 26660 samples]</span>
<span class="m" style="left:553px;top:668px;">101010101010101010101010101010100110011101101000011001110110100011111001111010010101001011100100100101010110011110111010011101110110011000 [<b>Pause:</b> 3892888 samples]</span>
<span class="m" style="left:553px;top:683px;">10101010101010101010101010101010100110100111110110011010011111011100110111100001011011011001001010100010111110110100101111000110011000111011101011010011001111010111001</span>
<div style="left:1862px;top:618px;width:14px;height:82px;background:#e2dfdb;border-left:1px solid #c6c2bc;"></div>
<div style="left:1862px;top:631px;width:14px;height:27px;background:linear-gradient(90deg,#fefefe,#f3f1ee);border-left:1px solid #c6c2bc;border-top:1px solid #c6c2bc;border-bottom:1px solid #c6c2bc;"></div>
<div style="left:1862px;top:618px;width:14px;height:14px;background:linear-gradient(90deg,#fcfbfa,#f1eeeb);border-left:1px solid #c6c2bc;border-bottom:1px solid #c6c2bc;"></div>
<div style="left:1862px;top:686px;width:14px;height:14px;background:linear-gradient(90deg,#fcfbfa,#f1eeeb);border-left:1px solid #c6c2bc;border-top:1px solid #c6c2bc;"></div>
<svg class="a" style="left:1862px;top:618px" width="14" height="14" viewBox="0 0 14 14"><path d="M3.4 9.4 L7.6 5 L11.8 9.4 Z" fill="#4a4a4a"/></svg>
<svg class="a" style="left:1862px;top:686px" width="14" height="14" viewBox="0 0 14 14"><path d="M3.4 5 L7.6 9.4 L11.8 5 Z" fill="#4a4a4a"/></svg>
</body></html>
